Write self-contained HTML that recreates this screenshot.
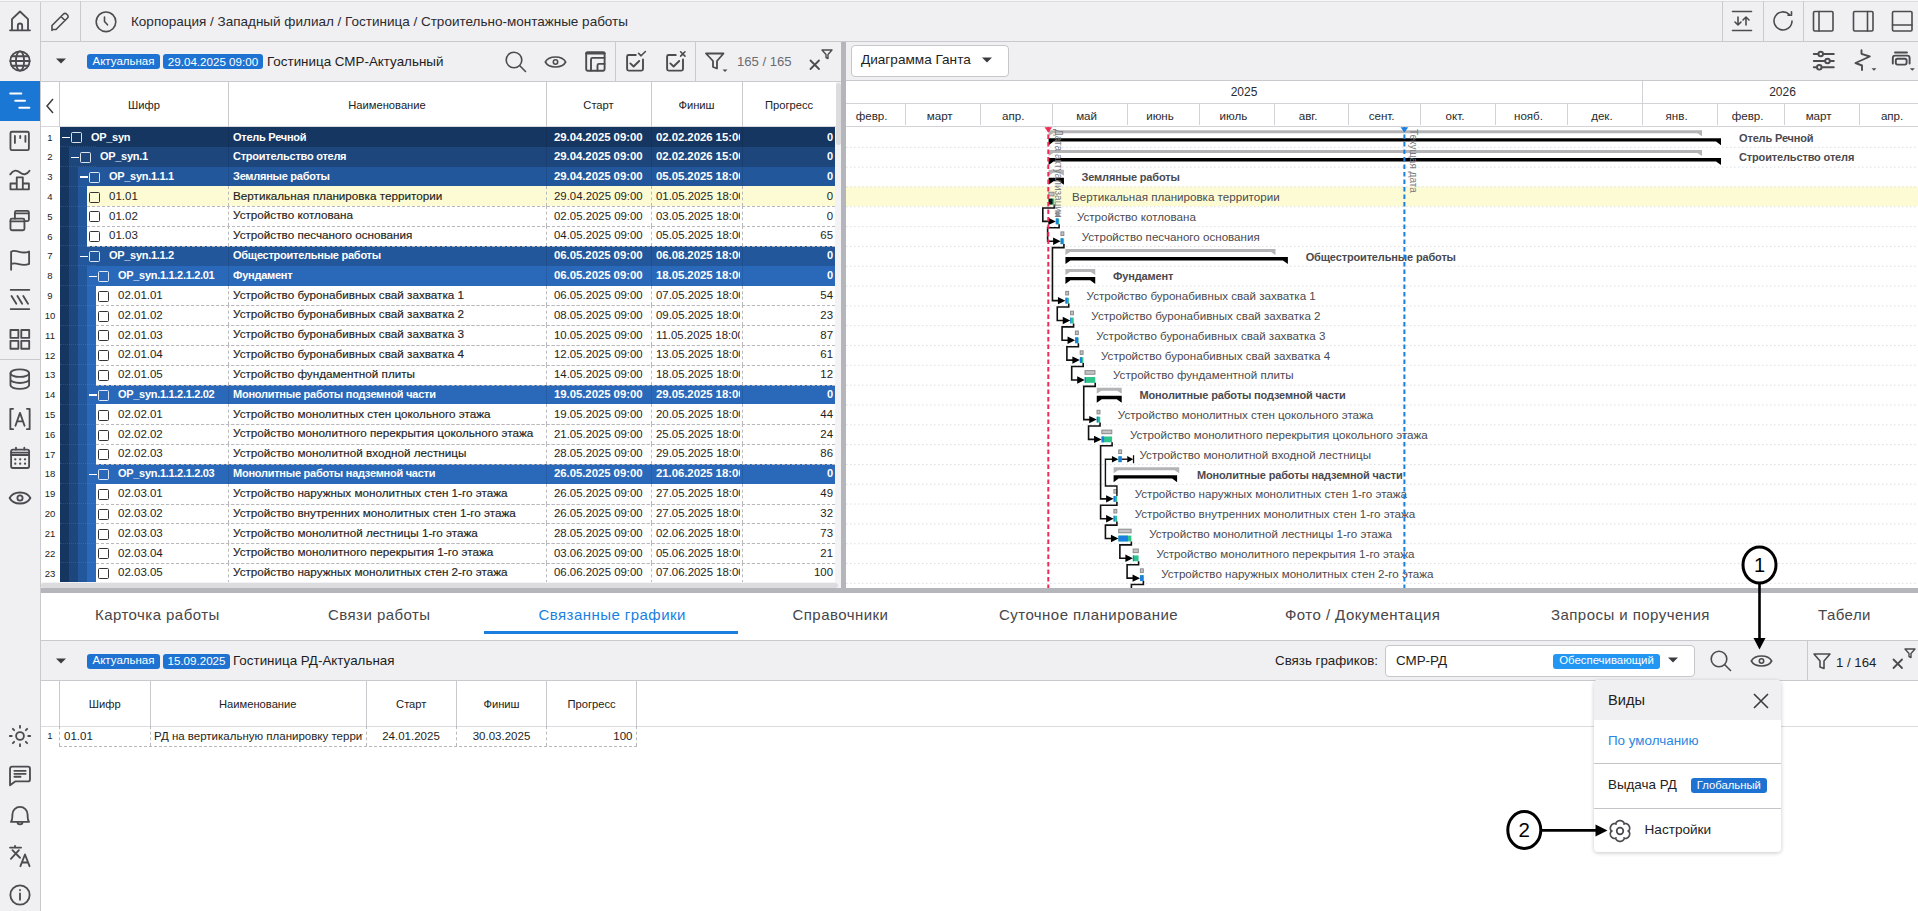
<!DOCTYPE html><html><head><meta charset="utf-8"><style>
html,body{margin:0;padding:0;}
body{width:1918px;height:911px;overflow:hidden;position:relative;background:#fff;font-family:'Liberation Sans', sans-serif;color:#222;}
svg{display:block}
.ic{fill:none;stroke:#4b4b50;stroke-width:1.6;stroke-linecap:round;stroke-linejoin:round}
</style></head><body>
<div style="position:absolute;left:0px;top:0px;width:40px;height:911px;background:#f0f0f3;"></div>
<div style="position:absolute;left:40px;top:0px;width:1px;height:911px;background:#c9c9ce;"></div>
<div style="position:absolute;left:0px;top:81px;width:40px;height:40px;background:#1b77d4;"></div>
<div style="position:absolute;left:0px;top:359px;width:40px;height:1px;background:#c9c9ce;"></div>
<svg style="position:absolute;left:6.5px;top:8px;overflow:visible;" width="26" height="26" viewBox="0 0 26 26"><g class="ic" style="stroke:#4b4b50;stroke-width:1.7" transform="scale(1.0833)"><path d="M2.8 20.6H21.2M4.6 20.6V10.2L12 3.2L19.4 10.2V20.6M10 20.6V16.3a2 2 0 0 1 4 0V20.6"/></g></svg>
<svg style="position:absolute;left:6.5px;top:48px;overflow:visible;" width="26" height="26" viewBox="0 0 26 26"><g class="ic" style="stroke:#4b4b50;stroke-width:1.7" transform="scale(1.0833)"><circle cx="12" cy="12" r="8.9"/><ellipse cx="12" cy="12" rx="3.8" ry="8.9"/><path d="M3.1 12H20.9M4.3 7.6H19.7M4.3 16.4H19.7"/></g></svg>
<svg style="position:absolute;left:6.5px;top:88px;overflow:visible;" width="26" height="26" viewBox="0 0 26 26"><g class="ic" style="stroke:#ffffff;stroke-width:1.9" transform="scale(1.0833)"><path d="M3 5H13.2M7.6 11.7H16.6M11.4 18.3H20.6"/></g></svg>
<svg style="position:absolute;left:6.5px;top:128px;overflow:visible;" width="26" height="26" viewBox="0 0 26 26"><g class="ic" style="stroke:#4b4b50;stroke-width:1.7" transform="scale(1.0833)"><rect x="3.2" y="3.5" width="17" height="16.9" rx="1.3"/><path d="M7.3 7.2V13.8M12.2 7.2V9.3M17 7.2V12.8"/></g></svg>
<svg style="position:absolute;left:6.5px;top:167px;overflow:visible;" width="26" height="26" viewBox="0 0 26 26"><g class="ic" style="stroke:#4b4b50;stroke-width:1.7" transform="scale(1.0833)"><path d="M3 6.8C6 2.4 9 2.6 12 5C15 7.4 18 7.6 20.8 3.4"/><path d="M3.2 20.6V15.2H9V20.6ZM9 20.6V9.6H14.6V20.6ZM14.6 20.6V15.2H20.2V20.6Z"/></g></svg>
<svg style="position:absolute;left:6.5px;top:207px;overflow:visible;" width="26" height="26" viewBox="0 0 26 26"><g class="ic" style="stroke:#4b4b50;stroke-width:1.7" transform="scale(1.0833)"><rect x="3.2" y="10.8" width="12.9" height="10.7" rx="1.4"/><path d="M3.2 13.2H16.1"/><path d="M7.3 10.8V5a1.4 1.4 0 0 1 1.4-1.4H18.8a1.4 1.4 0 0 1 1.4 1.4V11.6a1.4 1.4 0 0 1-1.4 1.4H16.1M7.3 5.9H20.2"/></g></svg>
<svg style="position:absolute;left:6.5px;top:247px;overflow:visible;" width="26" height="26" viewBox="0 0 26 26"><g class="ic" style="stroke:#4b4b50;stroke-width:1.7" transform="scale(1.0833)"><path d="M3.8 21V4.3C8.5 1.2 12.8 7.6 20.4 4.2V15.6C13 18.8 8.7 13 3.8 15.9"/></g></svg>
<svg style="position:absolute;left:6.5px;top:287px;overflow:visible;" width="26" height="26" viewBox="0 0 26 26"><g class="ic" style="stroke:#4b4b50;stroke-width:1.7" transform="scale(1.0833)"><path d="M3.4 2.6H20.6M3.4 20.4H20.6M4.2 8.3L8.6 15.4M9.6 8.3L14 15.4M15 8.3L19.4 15.4"/></g></svg>
<svg style="position:absolute;left:6.5px;top:327px;overflow:visible;" width="26" height="26" viewBox="0 0 26 26"><g class="ic" style="stroke:#4b4b50;stroke-width:1.7" transform="scale(1.0833)"><rect x="3.2" y="2.8" width="7.3" height="7.3"/><rect x="13.2" y="2.8" width="7.3" height="7.3"/><rect x="3.2" y="12.8" width="7.3" height="7.3"/><rect x="13.2" y="12.8" width="7.3" height="7.3"/></g></svg>
<svg style="position:absolute;left:6.5px;top:366px;overflow:visible;" width="26" height="26" viewBox="0 0 26 26"><g class="ic" style="stroke:#4b4b50;stroke-width:1.7" transform="scale(1.0833)"><ellipse cx="11.8" cy="6.6" rx="8.6" ry="3.5"/><path d="M3.2 6.6V17.6c0 2 3.9 3.5 8.6 3.5s8.6-1.5 8.6-3.5V6.6M3.2 12.2c0 2 3.9 3.5 8.6 3.5s8.6-1.5 8.6-3.5"/></g></svg>
<svg style="position:absolute;left:6.5px;top:406px;overflow:visible;" width="26" height="26" viewBox="0 0 26 26"><g class="ic" style="stroke:#4b4b50;stroke-width:1.7" transform="scale(1.0833)"><path d="M5.6 2.6H3.1V21.4H5.6M18.4 2.6H20.9V21.4H18.4M7.8 18.2L12 6.3L16.2 18.2M9.2 14.2H14.8"/></g></svg>
<svg style="position:absolute;left:6.5px;top:445px;overflow:visible;" width="26" height="26" viewBox="0 0 26 26"><g class="ic" style="stroke:#4b4b50;stroke-width:1.7" transform="scale(1.0833)"><rect x="3.8" y="4.2" width="16.6" height="17" rx="1.6"/><path d="M3.8 9.2H20.4M3.8 7H20.4M8.3 2.5V4.2M16 2.5V4.2"/><g style="stroke-width:2"><path d="M7.6 13.2h.1M12.1 13.2h.1M16.6 13.2h.1M7.6 17.2h.1M12.1 17.2h.1M16.6 17.2h.1"/></g></g></svg>
<svg style="position:absolute;left:6.5px;top:485px;overflow:visible;" width="26" height="26" viewBox="0 0 26 26"><g class="ic" style="stroke:#4b4b50;stroke-width:1.7" transform="scale(1.0833)"><path d="M2.4 12C6 5.2 18 5.2 21.6 12C18 18.8 6 18.8 2.4 12Z"/><circle cx="12" cy="12" r="2.4"/></g></svg>
<svg style="position:absolute;left:6.5px;top:723px;overflow:visible;" width="26" height="26" viewBox="0 0 26 26"><g class="ic" style="stroke:#4b4b50;stroke-width:1.7" transform="scale(1.0833)"><circle cx="12" cy="12" r="3.6"/><path d="M12 2.6V4.4M12 19.6V21.4M2.6 12H4.4M19.6 12H21.4M5.4 5.4L6.6 6.6M17.4 17.4L18.6 18.6M5.4 18.6L6.6 17.4M17.4 6.6L18.6 5.4"/></g></svg>
<svg style="position:absolute;left:6.5px;top:763px;overflow:visible;" width="26" height="26" viewBox="0 0 26 26"><g class="ic" style="stroke:#4b4b50;stroke-width:1.7" transform="scale(1.0833)"><path d="M2.8 5.2a1.8 1.8 0 0 1 1.8-1.8h14.8a1.8 1.8 0 0 1 1.8 1.8V15.2a1.8 1.8 0 0 1-1.8 1.8H7.5L2.8 20.6Z"/><path d="M6.8 7.3H17.2M6.8 10H17.2M6.8 12.7H12.5"/></g></svg>
<svg style="position:absolute;left:6.5px;top:803px;overflow:visible;" width="26" height="26" viewBox="0 0 26 26"><g class="ic" style="stroke:#4b4b50;stroke-width:1.7" transform="scale(1.0833)"><path d="M3.6 17.4H20.4C19.2 16.2 19 14.4 19 10.6a7 7 0 0 0-14 0c0 3.8-.2 5.6-1.4 6.8ZM9.6 17.4a2.4 2.4 0 0 0 4.8 0"/></g></svg>
<svg style="position:absolute;left:6.5px;top:843px;overflow:visible;" width="26" height="26" viewBox="0 0 26 26"><g class="ic" style="stroke:#4b4b50;stroke-width:1.7" transform="scale(1.0833)"><path d="M2.8 4.2H13M7.4 2.6V4.2M5 6.6L12 13.6M11 6.6L3.6 14.6M12.4 21.4L16.6 10.6L20.8 21.4M13.8 18H19.4"/></g></svg>
<svg style="position:absolute;left:6.5px;top:882px;overflow:visible;" width="26" height="26" viewBox="0 0 26 26"><g class="ic" style="stroke:#4b4b50;stroke-width:1.7" transform="scale(1.0833)"><circle cx="12" cy="12" r="8.9"/><path d="M12 10.6V16.4M12 7.4v.2"/></g></svg>
<div style="position:absolute;left:41px;top:0px;width:1877px;height:41px;background:#f0f0f3;"></div>
<div style="position:absolute;left:0px;top:0px;width:1918px;height:1px;background:#f7f7f9;"></div>
<div style="position:absolute;left:0px;top:1px;width:1918px;height:1px;background:#dcdce0;"></div>
<div style="position:absolute;left:41px;top:41px;width:1877px;height:1px;background:#c9c9ce;"></div>
<div style="position:absolute;left:80px;top:1px;width:1px;height:40px;background:#c9c9ce;"></div>
<svg style="position:absolute;left:48px;top:9px;overflow:visible;" width="24" height="24" viewBox="0 0 24 24"><g class="ic"><path d="M4 21.5V16.5L15.5 5a2.1 2.1 0 0 1 3 0L19.5 6a2.1 2.1 0 0 1 0 3L8 20.5H4ZM13 7.5L17 11.5"/></g></svg>
<svg style="position:absolute;left:94px;top:10px;overflow:visible;" width="24" height="24" viewBox="0 0 24 24"><g class="ic"><circle cx="12" cy="11.8" r="9.8"/><path d="M10.5 7V11.5L13.5 14.8"/></g></svg>
<div style="position:absolute;left:131px;top:12px;white-space:nowrap;height:20px;line-height:20px;font-size:13.5px;color:#2a2a2e;letter-spacing:0px;">Корпорация / Западный филиал / Гостиница / Строительно-монтажные работы</div>
<div style="position:absolute;left:1722px;top:1px;width:1px;height:40px;background:#c9c9ce;"></div>
<div style="position:absolute;left:1763px;top:1px;width:1px;height:40px;background:#c9c9ce;"></div>
<div style="position:absolute;left:1803px;top:1px;width:1px;height:40px;background:#c9c9ce;"></div>
<svg style="position:absolute;left:1731px;top:10px;overflow:visible;" width="22" height="22" viewBox="0 0 22 22"><g class="ic"><path d="M1.5 1.5H20.5M1.5 20.5H20.5M7 7V15M4 12L7 15L10 12M15 15V7M12 10L15 7L18 10"/></g></svg>
<svg style="position:absolute;left:1772px;top:10px;overflow:visible;" width="22" height="22" viewBox="0 0 22 22"><g class="ic"><path d="M20 11a9 9 0 1 1-2.6-6.4M19.5 1.8V5.3H16"/></g></svg>
<svg style="position:absolute;left:1812px;top:10px;overflow:visible;" width="22" height="22" viewBox="0 0 22 22"><g class="ic"><rect x="1.5" y="1.5" width="19.5" height="19.5" rx="1.2"/><path d="M7 1.5V21"/></g></svg>
<svg style="position:absolute;left:1852px;top:10px;overflow:visible;" width="22" height="22" viewBox="0 0 22 22"><g class="ic"><rect x="1.5" y="1.5" width="19.5" height="19.5" rx="1.2"/><path d="M15.5 1.5V21"/></g></svg>
<svg style="position:absolute;left:1891px;top:10px;overflow:visible;" width="22" height="22" viewBox="0 0 22 22"><g class="ic"><rect x="1.5" y="1.5" width="19.5" height="19.5" rx="1.2"/><path d="M1.5 15H21"/></g></svg>
<div style="position:absolute;left:41px;top:42px;width:800px;height:39px;background:#f0f0f3;"></div>
<div style="position:absolute;left:41px;top:81px;width:800px;height:1px;background:#c9c9ce;"></div>
<div style="position:absolute;left:846px;top:42px;width:1072px;height:38px;background:#f0f0f3;"></div>
<div style="position:absolute;left:846px;top:80px;width:1072px;height:1px;background:#c9c9ce;"></div>
<div style="position:absolute;left:615px;top:42px;width:1px;height:39px;background:#c9c9ce;"></div>
<div style="position:absolute;left:695px;top:42px;width:1px;height:39px;background:#c9c9ce;"></div>
<svg style="position:absolute;left:55px;top:57px;overflow:visible;" width="12" height="8" viewBox="0 0 12 8"><path d="M1 1.5H11L6 6.5Z" fill="#3c3c40"/></svg>
<div style="position:absolute;left:87px;top:54px;width:73px;height:15px;background:#1e73d2;border-radius:3px;color:#fff;font-size:11.5px;line-height:15px;text-align:center;white-space:nowrap;letter-spacing:0px;display:flex;align-items:center;justify-content:center;"><span style="line-height:1">Актуальная</span></div>
<div style="position:absolute;left:163px;top:54px;width:100px;height:15px;background:#1e73d2;border-radius:3px;color:#fff;font-size:11.6px;line-height:15px;text-align:center;white-space:nowrap;letter-spacing:0px;display:flex;align-items:center;justify-content:center;"><span style="line-height:1">29.04.2025 09:00</span></div>
<div style="position:absolute;left:267px;top:52px;white-space:nowrap;height:20px;line-height:20px;font-size:13.4px;color:#1e1e22;">Гостиница СМР-Актуальный</div>
<svg style="position:absolute;left:504px;top:50px;overflow:visible;" width="24" height="24" viewBox="0 0 24 24"><g class="ic"><circle cx="10" cy="10" r="7.8"/><path d="M15.8 15.8L21.5 21.5"/></g></svg>
<svg style="position:absolute;left:544px;top:50px;overflow:visible;" width="24" height="24" viewBox="0 0 24 24"><g class="ic"><path d="M1.3 12C5 5.3 18 5.3 21.7 12C18 18.7 5 18.7 1.3 12Z"/><circle cx="11.5" cy="12" r="2.2"/></g></svg>
<svg style="position:absolute;left:584px;top:50px;overflow:visible;" width="24" height="24" viewBox="0 0 24 24"><g class="ic" style="stroke-width:1.9"><rect x="2.2" y="2.3" width="18.4" height="18.4" rx="1.4"/><path d="M2.5 3.2H20.3" style="stroke-width:2.4"/><path d="M7 20.6V9.4a1.5 1.5 0 0 1 1.5-1.5H20.5M13.5 20.6V15.4a1.5 1.5 0 0 1 1.5-1.5H20.5"/></g></svg>
<svg style="position:absolute;left:624px;top:50px;overflow:visible;" width="24" height="24" viewBox="0 0 24 24"><g class="ic" style="stroke-width:1.9"><path d="M11.8 5H4.6a1.5 1.5 0 0 0-1.5 1.5V19.1a1.5 1.5 0 0 0 1.5 1.5H17.5a1.5 1.5 0 0 0 1.5-1.5V9.4"/><path d="M6.3 13.4L9.6 16.5L15.2 11"/><path d="M14.6 3.4L17.1 5.8L21.4 1.5" style="stroke-width:1.6"/></g></svg>
<svg style="position:absolute;left:664px;top:50px;overflow:visible;" width="24" height="24" viewBox="0 0 24 24"><g class="ic" style="stroke-width:1.9"><path d="M11.8 5H4.6a1.5 1.5 0 0 0-1.5 1.5V19.1a1.5 1.5 0 0 0 1.5 1.5H17.5a1.5 1.5 0 0 0 1.5-1.5V9.4"/><path d="M6.3 13.4L9.6 16.5L15.2 11"/><path d="M16.6 1.8L21 6.1M21 1.8L16.6 6.1" style="stroke-width:1.6"/></g></svg>
<svg style="position:absolute;left:704px;top:50px;overflow:visible;" width="24" height="24" viewBox="0 0 24 24"><g class="ic" style="stroke-width:1.8"><path d="M2 3.5H19.5L13 11V18.5L9 17V11Z"/></g><path d="M18.5 19.5H23.5L21 22Z" fill="#4b4b50"/></svg>
<div style="position:absolute;left:737px;top:52px;white-space:nowrap;height:20px;line-height:20px;font-size:13.1px;color:#6b6b70;">165 / 165</div>
<svg style="position:absolute;left:808px;top:48px;overflow:visible;" width="26" height="26" viewBox="0 0 26 26"><g class="ic" style="stroke-width:1.8"><path d="M2.5 12.5L11 21M11 12.5L2.5 21"/><path d="M14 2H24L20 6.5V10.5L18 9.5V6.5Z" style="stroke-width:1.4"/></g></svg>
<div style="position:absolute;left:835px;top:82px;width:6px;height:501px;background:#f3f3f5;"></div>
<div style="position:absolute;left:836px;top:83px;width:5px;height:62px;background:#dcdcdf;border-radius:2.5px;"></div>
<div style="position:absolute;left:841px;top:42px;width:5px;height:551px;background:#b5b6bb;"></div>
<div style="position:absolute;left:851px;top:45px;width:158px;height:31.5px;box-sizing:border-box;border:1px solid #c6c6cb;border-radius:4px;background:#fff;"></div>
<div style="position:absolute;left:861px;top:50px;white-space:nowrap;height:20px;line-height:20px;font-size:13.6px;color:#1e1e22;">Диаграмма Ганта</div>
<svg style="position:absolute;left:981px;top:56px;overflow:visible;" width="12" height="8" viewBox="0 0 12 8"><path d="M1 1.5H11L6 6.5Z" fill="#3c3c40"/></svg>
<svg style="position:absolute;left:1812px;top:49px;overflow:visible;" width="24" height="24" viewBox="0 0 24 24"><g class="ic" style="stroke-width:1.9"><path d="M1.8 5H6.4M11 5H21.8M1.8 12H13.2M17.8 12H21.8M1.8 18.3H5M9.6 18.3H21.8"/><circle cx="8.7" cy="5" r="2.3"/><circle cx="15.5" cy="12" r="2.3"/><circle cx="7.3" cy="18.3" r="2.3"/></g></svg>
<svg style="position:absolute;left:1854px;top:49px;overflow:visible;" width="24" height="24" viewBox="0 0 24 24"><g class="ic" style="stroke-width:1.9"><path d="M7.5 1.3V4.8L15.8 7.5L1.5 14L8 16.5V21"/></g><path d="M17.5 19.3H22.5L20 21.8Z" fill="#4b4b50"/></svg>
<svg style="position:absolute;left:1891px;top:49px;overflow:visible;" width="26" height="24" viewBox="0 0 26 24"><g class="ic" style="stroke-width:1.9"><path d="M4 3.5H16M1.8 14.5V9a2.4 2.4 0 0 1 2.4-2.4H16.2a2.4 2.4 0 0 1 2.4 2.4V14.5M4.8 11.5a1.8 1.8 0 0 1 1.8-1.8H13.8a1.8 1.8 0 0 1 1.8 1.8V13.8a1.8 1.8 0 0 1-1.8 1.8H6.6a1.8 1.8 0 0 1-1.8-1.8Z"/></g><path d="M18.8 19.3H23.8L21.3 21.8Z" fill="#4b4b50"/></svg>
<div style="position:absolute;left:41px;top:82px;width:795px;height:45px;background:#fff;"></div>
<div style="position:absolute;left:41px;top:126px;width:795px;height:1px;background:#d9d9dd;"></div>
<div style="position:absolute;left:59px;top:82px;width:1px;height:45px;background:#c9c9ce;"></div>
<div style="position:absolute;left:228px;top:82px;width:1px;height:45px;background:#c9c9ce;"></div>
<div style="position:absolute;left:546px;top:82px;width:1px;height:45px;background:#c9c9ce;"></div>
<div style="position:absolute;left:651px;top:82px;width:1px;height:45px;background:#c9c9ce;"></div>
<div style="position:absolute;left:742px;top:82px;width:1px;height:45px;background:#c9c9ce;"></div>
<svg style="position:absolute;left:44px;top:97px;overflow:visible;" width="12" height="18" viewBox="0 0 12 18"><path d="M9 2L3 9L9 16" fill="none" stroke="#3c3c40" stroke-width="1.5"/></svg>
<div style="position:absolute;left:60px;top:95px;width:168px;height:20px;line-height:20px;text-align:center;font-size:11.2px;color:#222;white-space:nowrap;">Шифр</div>
<div style="position:absolute;left:228px;top:95px;width:318px;height:20px;line-height:20px;text-align:center;font-size:11.2px;color:#222;white-space:nowrap;">Наименование</div>
<div style="position:absolute;left:546px;top:95px;width:105px;height:20px;line-height:20px;text-align:center;font-size:11.2px;color:#222;white-space:nowrap;">Старт</div>
<div style="position:absolute;left:651px;top:95px;width:91px;height:20px;line-height:20px;text-align:center;font-size:11.2px;color:#222;white-space:nowrap;">Финиш</div>
<div style="position:absolute;left:742px;top:95px;width:94px;height:20px;line-height:20px;text-align:center;font-size:11.2px;color:#222;white-space:nowrap;">Прогресс</div>
<div style="position:absolute;left:41px;top:127px;width:795px;height:455px;overflow:hidden;">
<div style="position:absolute;left:19px;top:0.0px;width:775px;height:20.12px;background:#163662;"></div>
<div style="position:absolute;left:19px;top:19.82px;width:9px;height:20.12px;background:#163662;"></div>
<div style="position:absolute;left:28px;top:19.82px;width:766px;height:20.12px;background:#1c467c;"></div>
<div style="position:absolute;left:19px;top:39.64px;width:9px;height:20.12px;background:#163662;"></div>
<div style="position:absolute;left:28px;top:39.64px;width:9px;height:20.12px;background:#1c467c;"></div>
<div style="position:absolute;left:37px;top:39.64px;width:757px;height:20.12px;background:#22579b;"></div>
<div style="position:absolute;left:19px;top:59.46px;width:9px;height:20.12px;background:#163662;"></div>
<div style="position:absolute;left:28px;top:59.46px;width:9px;height:20.12px;background:#1c467c;"></div>
<div style="position:absolute;left:37px;top:59.46px;width:9px;height:20.12px;background:#22579b;"></div>
<div style="position:absolute;left:46px;top:59.46px;width:748px;height:20.12px;background:#fdfbd4;"></div>
<div style="position:absolute;left:19px;top:79.28px;width:9px;height:20.12px;background:#163662;"></div>
<div style="position:absolute;left:28px;top:79.28px;width:9px;height:20.12px;background:#1c467c;"></div>
<div style="position:absolute;left:37px;top:79.28px;width:9px;height:20.12px;background:#22579b;"></div>
<div style="position:absolute;left:46px;top:79.28px;width:748px;height:20.12px;background:#ffffff;"></div>
<div style="position:absolute;left:19px;top:99.1px;width:9px;height:20.12px;background:#163662;"></div>
<div style="position:absolute;left:28px;top:99.1px;width:9px;height:20.12px;background:#1c467c;"></div>
<div style="position:absolute;left:37px;top:99.1px;width:9px;height:20.12px;background:#22579b;"></div>
<div style="position:absolute;left:46px;top:99.1px;width:748px;height:20.12px;background:#ffffff;"></div>
<div style="position:absolute;left:19px;top:118.92px;width:9px;height:20.12px;background:#163662;"></div>
<div style="position:absolute;left:28px;top:118.92px;width:9px;height:20.12px;background:#1c467c;"></div>
<div style="position:absolute;left:37px;top:118.92px;width:757px;height:20.12px;background:#22579b;"></div>
<div style="position:absolute;left:19px;top:138.74px;width:9px;height:20.12px;background:#163662;"></div>
<div style="position:absolute;left:28px;top:138.74px;width:9px;height:20.12px;background:#1c467c;"></div>
<div style="position:absolute;left:37px;top:138.74px;width:9px;height:20.12px;background:#22579b;"></div>
<div style="position:absolute;left:46px;top:138.74px;width:748px;height:20.12px;background:#2a69b9;"></div>
<div style="position:absolute;left:19px;top:158.56px;width:9px;height:20.12px;background:#163662;"></div>
<div style="position:absolute;left:28px;top:158.56px;width:9px;height:20.12px;background:#1c467c;"></div>
<div style="position:absolute;left:37px;top:158.56px;width:9px;height:20.12px;background:#22579b;"></div>
<div style="position:absolute;left:46px;top:158.56px;width:9px;height:20.12px;background:#2a69b9;"></div>
<div style="position:absolute;left:55px;top:158.56px;width:739px;height:20.12px;background:#ffffff;"></div>
<div style="position:absolute;left:19px;top:178.38px;width:9px;height:20.12px;background:#163662;"></div>
<div style="position:absolute;left:28px;top:178.38px;width:9px;height:20.12px;background:#1c467c;"></div>
<div style="position:absolute;left:37px;top:178.38px;width:9px;height:20.12px;background:#22579b;"></div>
<div style="position:absolute;left:46px;top:178.38px;width:9px;height:20.12px;background:#2a69b9;"></div>
<div style="position:absolute;left:55px;top:178.38px;width:739px;height:20.12px;background:#ffffff;"></div>
<div style="position:absolute;left:19px;top:198.2px;width:9px;height:20.12px;background:#163662;"></div>
<div style="position:absolute;left:28px;top:198.2px;width:9px;height:20.12px;background:#1c467c;"></div>
<div style="position:absolute;left:37px;top:198.2px;width:9px;height:20.12px;background:#22579b;"></div>
<div style="position:absolute;left:46px;top:198.2px;width:9px;height:20.12px;background:#2a69b9;"></div>
<div style="position:absolute;left:55px;top:198.2px;width:739px;height:20.12px;background:#ffffff;"></div>
<div style="position:absolute;left:19px;top:218.02px;width:9px;height:20.12px;background:#163662;"></div>
<div style="position:absolute;left:28px;top:218.02px;width:9px;height:20.12px;background:#1c467c;"></div>
<div style="position:absolute;left:37px;top:218.02px;width:9px;height:20.12px;background:#22579b;"></div>
<div style="position:absolute;left:46px;top:218.02px;width:9px;height:20.12px;background:#2a69b9;"></div>
<div style="position:absolute;left:55px;top:218.02px;width:739px;height:20.12px;background:#ffffff;"></div>
<div style="position:absolute;left:19px;top:237.84px;width:9px;height:20.12px;background:#163662;"></div>
<div style="position:absolute;left:28px;top:237.84px;width:9px;height:20.12px;background:#1c467c;"></div>
<div style="position:absolute;left:37px;top:237.84px;width:9px;height:20.12px;background:#22579b;"></div>
<div style="position:absolute;left:46px;top:237.84px;width:9px;height:20.12px;background:#2a69b9;"></div>
<div style="position:absolute;left:55px;top:237.84px;width:739px;height:20.12px;background:#ffffff;"></div>
<div style="position:absolute;left:19px;top:257.66px;width:9px;height:20.12px;background:#163662;"></div>
<div style="position:absolute;left:28px;top:257.66px;width:9px;height:20.12px;background:#1c467c;"></div>
<div style="position:absolute;left:37px;top:257.66px;width:9px;height:20.12px;background:#22579b;"></div>
<div style="position:absolute;left:46px;top:257.66px;width:748px;height:20.12px;background:#2a69b9;"></div>
<div style="position:absolute;left:19px;top:277.48px;width:9px;height:20.12px;background:#163662;"></div>
<div style="position:absolute;left:28px;top:277.48px;width:9px;height:20.12px;background:#1c467c;"></div>
<div style="position:absolute;left:37px;top:277.48px;width:9px;height:20.12px;background:#22579b;"></div>
<div style="position:absolute;left:46px;top:277.48px;width:9px;height:20.12px;background:#2a69b9;"></div>
<div style="position:absolute;left:55px;top:277.48px;width:739px;height:20.12px;background:#ffffff;"></div>
<div style="position:absolute;left:19px;top:297.3px;width:9px;height:20.12px;background:#163662;"></div>
<div style="position:absolute;left:28px;top:297.3px;width:9px;height:20.12px;background:#1c467c;"></div>
<div style="position:absolute;left:37px;top:297.3px;width:9px;height:20.12px;background:#22579b;"></div>
<div style="position:absolute;left:46px;top:297.3px;width:9px;height:20.12px;background:#2a69b9;"></div>
<div style="position:absolute;left:55px;top:297.3px;width:739px;height:20.12px;background:#ffffff;"></div>
<div style="position:absolute;left:19px;top:317.12px;width:9px;height:20.12px;background:#163662;"></div>
<div style="position:absolute;left:28px;top:317.12px;width:9px;height:20.12px;background:#1c467c;"></div>
<div style="position:absolute;left:37px;top:317.12px;width:9px;height:20.12px;background:#22579b;"></div>
<div style="position:absolute;left:46px;top:317.12px;width:9px;height:20.12px;background:#2a69b9;"></div>
<div style="position:absolute;left:55px;top:317.12px;width:739px;height:20.12px;background:#ffffff;"></div>
<div style="position:absolute;left:19px;top:336.94px;width:9px;height:20.12px;background:#163662;"></div>
<div style="position:absolute;left:28px;top:336.94px;width:9px;height:20.12px;background:#1c467c;"></div>
<div style="position:absolute;left:37px;top:336.94px;width:9px;height:20.12px;background:#22579b;"></div>
<div style="position:absolute;left:46px;top:336.94px;width:748px;height:20.12px;background:#2a69b9;"></div>
<div style="position:absolute;left:19px;top:356.76px;width:9px;height:20.12px;background:#163662;"></div>
<div style="position:absolute;left:28px;top:356.76px;width:9px;height:20.12px;background:#1c467c;"></div>
<div style="position:absolute;left:37px;top:356.76px;width:9px;height:20.12px;background:#22579b;"></div>
<div style="position:absolute;left:46px;top:356.76px;width:9px;height:20.12px;background:#2a69b9;"></div>
<div style="position:absolute;left:55px;top:356.76px;width:739px;height:20.12px;background:#ffffff;"></div>
<div style="position:absolute;left:19px;top:376.58px;width:9px;height:20.12px;background:#163662;"></div>
<div style="position:absolute;left:28px;top:376.58px;width:9px;height:20.12px;background:#1c467c;"></div>
<div style="position:absolute;left:37px;top:376.58px;width:9px;height:20.12px;background:#22579b;"></div>
<div style="position:absolute;left:46px;top:376.58px;width:9px;height:20.12px;background:#2a69b9;"></div>
<div style="position:absolute;left:55px;top:376.58px;width:739px;height:20.12px;background:#ffffff;"></div>
<div style="position:absolute;left:19px;top:396.4px;width:9px;height:20.12px;background:#163662;"></div>
<div style="position:absolute;left:28px;top:396.4px;width:9px;height:20.12px;background:#1c467c;"></div>
<div style="position:absolute;left:37px;top:396.4px;width:9px;height:20.12px;background:#22579b;"></div>
<div style="position:absolute;left:46px;top:396.4px;width:9px;height:20.12px;background:#2a69b9;"></div>
<div style="position:absolute;left:55px;top:396.4px;width:739px;height:20.12px;background:#ffffff;"></div>
<div style="position:absolute;left:19px;top:416.22px;width:9px;height:20.12px;background:#163662;"></div>
<div style="position:absolute;left:28px;top:416.22px;width:9px;height:20.12px;background:#1c467c;"></div>
<div style="position:absolute;left:37px;top:416.22px;width:9px;height:20.12px;background:#22579b;"></div>
<div style="position:absolute;left:46px;top:416.22px;width:9px;height:20.12px;background:#2a69b9;"></div>
<div style="position:absolute;left:55px;top:416.22px;width:739px;height:20.12px;background:#ffffff;"></div>
<div style="position:absolute;left:19px;top:436.04px;width:9px;height:20.12px;background:#163662;"></div>
<div style="position:absolute;left:28px;top:436.04px;width:9px;height:20.12px;background:#1c467c;"></div>
<div style="position:absolute;left:37px;top:436.04px;width:9px;height:20.12px;background:#22579b;"></div>
<div style="position:absolute;left:46px;top:436.04px;width:9px;height:20.12px;background:#2a69b9;"></div>
<div style="position:absolute;left:55px;top:436.04px;width:739px;height:20.12px;background:#ffffff;"></div>
<div style="position:absolute;left:187px;top:0.0px;width:1px;height:19.82px;background:rgba(0,0,0,0.10);"></div>
<div style="position:absolute;left:505px;top:0.0px;width:1px;height:19.82px;background:rgba(0,0,0,0.10);"></div>
<div style="position:absolute;left:610px;top:0.0px;width:1px;height:19.82px;background:rgba(0,0,0,0.10);"></div>
<div style="position:absolute;left:701px;top:0.0px;width:1px;height:19.82px;background:rgba(0,0,0,0.10);"></div>
<div style="position:absolute;left:187px;top:19.82px;width:1px;height:19.82px;background:rgba(0,0,0,0.10);"></div>
<div style="position:absolute;left:505px;top:19.82px;width:1px;height:19.82px;background:rgba(0,0,0,0.10);"></div>
<div style="position:absolute;left:610px;top:19.82px;width:1px;height:19.82px;background:rgba(0,0,0,0.10);"></div>
<div style="position:absolute;left:701px;top:19.82px;width:1px;height:19.82px;background:rgba(0,0,0,0.10);"></div>
<div style="position:absolute;left:187px;top:39.64px;width:1px;height:19.82px;background:rgba(0,0,0,0.10);"></div>
<div style="position:absolute;left:505px;top:39.64px;width:1px;height:19.82px;background:rgba(0,0,0,0.10);"></div>
<div style="position:absolute;left:610px;top:39.64px;width:1px;height:19.82px;background:rgba(0,0,0,0.10);"></div>
<div style="position:absolute;left:701px;top:39.64px;width:1px;height:19.82px;background:rgba(0,0,0,0.10);"></div>
<div style="position:absolute;left:46px;top:79.33px;width:748px;height:0px;border-top:1px dashed #b9b9bd;"></div>
<div style="position:absolute;left:187px;top:59.46px;width:0px;height:19.82px;border-left:1px dashed #b9b9bd;"></div>
<div style="position:absolute;left:505px;top:59.46px;width:0px;height:19.82px;border-left:1px dashed #b9b9bd;"></div>
<div style="position:absolute;left:610px;top:59.46px;width:0px;height:19.82px;border-left:1px dashed #b9b9bd;"></div>
<div style="position:absolute;left:701px;top:59.46px;width:0px;height:19.82px;border-left:1px dashed #b9b9bd;"></div>
<div style="position:absolute;left:46px;top:99.15px;width:748px;height:0px;border-top:1px dashed #b9b9bd;"></div>
<div style="position:absolute;left:46px;top:79.33px;width:748px;height:0px;border-top:1px dashed #b9b9bd;"></div>
<div style="position:absolute;left:187px;top:79.28px;width:0px;height:19.82px;border-left:1px dashed #b9b9bd;"></div>
<div style="position:absolute;left:505px;top:79.28px;width:0px;height:19.82px;border-left:1px dashed #b9b9bd;"></div>
<div style="position:absolute;left:610px;top:79.28px;width:0px;height:19.82px;border-left:1px dashed #b9b9bd;"></div>
<div style="position:absolute;left:701px;top:79.28px;width:0px;height:19.82px;border-left:1px dashed #b9b9bd;"></div>
<div style="position:absolute;left:46px;top:118.97px;width:748px;height:0px;border-top:1px dashed #b9b9bd;"></div>
<div style="position:absolute;left:46px;top:99.15px;width:748px;height:0px;border-top:1px dashed #b9b9bd;"></div>
<div style="position:absolute;left:187px;top:99.1px;width:0px;height:19.82px;border-left:1px dashed #b9b9bd;"></div>
<div style="position:absolute;left:505px;top:99.1px;width:0px;height:19.82px;border-left:1px dashed #b9b9bd;"></div>
<div style="position:absolute;left:610px;top:99.1px;width:0px;height:19.82px;border-left:1px dashed #b9b9bd;"></div>
<div style="position:absolute;left:701px;top:99.1px;width:0px;height:19.82px;border-left:1px dashed #b9b9bd;"></div>
<div style="position:absolute;left:187px;top:118.92px;width:1px;height:19.82px;background:rgba(0,0,0,0.10);"></div>
<div style="position:absolute;left:505px;top:118.92px;width:1px;height:19.82px;background:rgba(0,0,0,0.10);"></div>
<div style="position:absolute;left:610px;top:118.92px;width:1px;height:19.82px;background:rgba(0,0,0,0.10);"></div>
<div style="position:absolute;left:701px;top:118.92px;width:1px;height:19.82px;background:rgba(0,0,0,0.10);"></div>
<div style="position:absolute;left:187px;top:138.74px;width:1px;height:19.82px;background:rgba(0,0,0,0.10);"></div>
<div style="position:absolute;left:505px;top:138.74px;width:1px;height:19.82px;background:rgba(0,0,0,0.10);"></div>
<div style="position:absolute;left:610px;top:138.74px;width:1px;height:19.82px;background:rgba(0,0,0,0.10);"></div>
<div style="position:absolute;left:701px;top:138.74px;width:1px;height:19.82px;background:rgba(0,0,0,0.10);"></div>
<div style="position:absolute;left:55px;top:178.43px;width:739px;height:0px;border-top:1px dashed #b9b9bd;"></div>
<div style="position:absolute;left:187px;top:158.56px;width:0px;height:19.82px;border-left:1px dashed #b9b9bd;"></div>
<div style="position:absolute;left:505px;top:158.56px;width:0px;height:19.82px;border-left:1px dashed #b9b9bd;"></div>
<div style="position:absolute;left:610px;top:158.56px;width:0px;height:19.82px;border-left:1px dashed #b9b9bd;"></div>
<div style="position:absolute;left:701px;top:158.56px;width:0px;height:19.82px;border-left:1px dashed #b9b9bd;"></div>
<div style="position:absolute;left:55px;top:198.25px;width:739px;height:0px;border-top:1px dashed #b9b9bd;"></div>
<div style="position:absolute;left:55px;top:178.43px;width:739px;height:0px;border-top:1px dashed #b9b9bd;"></div>
<div style="position:absolute;left:187px;top:178.38px;width:0px;height:19.82px;border-left:1px dashed #b9b9bd;"></div>
<div style="position:absolute;left:505px;top:178.38px;width:0px;height:19.82px;border-left:1px dashed #b9b9bd;"></div>
<div style="position:absolute;left:610px;top:178.38px;width:0px;height:19.82px;border-left:1px dashed #b9b9bd;"></div>
<div style="position:absolute;left:701px;top:178.38px;width:0px;height:19.82px;border-left:1px dashed #b9b9bd;"></div>
<div style="position:absolute;left:55px;top:218.07px;width:739px;height:0px;border-top:1px dashed #b9b9bd;"></div>
<div style="position:absolute;left:55px;top:198.25px;width:739px;height:0px;border-top:1px dashed #b9b9bd;"></div>
<div style="position:absolute;left:187px;top:198.2px;width:0px;height:19.82px;border-left:1px dashed #b9b9bd;"></div>
<div style="position:absolute;left:505px;top:198.2px;width:0px;height:19.82px;border-left:1px dashed #b9b9bd;"></div>
<div style="position:absolute;left:610px;top:198.2px;width:0px;height:19.82px;border-left:1px dashed #b9b9bd;"></div>
<div style="position:absolute;left:701px;top:198.2px;width:0px;height:19.82px;border-left:1px dashed #b9b9bd;"></div>
<div style="position:absolute;left:55px;top:237.89px;width:739px;height:0px;border-top:1px dashed #b9b9bd;"></div>
<div style="position:absolute;left:55px;top:218.07px;width:739px;height:0px;border-top:1px dashed #b9b9bd;"></div>
<div style="position:absolute;left:187px;top:218.02px;width:0px;height:19.82px;border-left:1px dashed #b9b9bd;"></div>
<div style="position:absolute;left:505px;top:218.02px;width:0px;height:19.82px;border-left:1px dashed #b9b9bd;"></div>
<div style="position:absolute;left:610px;top:218.02px;width:0px;height:19.82px;border-left:1px dashed #b9b9bd;"></div>
<div style="position:absolute;left:701px;top:218.02px;width:0px;height:19.82px;border-left:1px dashed #b9b9bd;"></div>
<div style="position:absolute;left:55px;top:257.71px;width:739px;height:0px;border-top:1px dashed #b9b9bd;"></div>
<div style="position:absolute;left:55px;top:237.89px;width:739px;height:0px;border-top:1px dashed #b9b9bd;"></div>
<div style="position:absolute;left:187px;top:237.84px;width:0px;height:19.82px;border-left:1px dashed #b9b9bd;"></div>
<div style="position:absolute;left:505px;top:237.84px;width:0px;height:19.82px;border-left:1px dashed #b9b9bd;"></div>
<div style="position:absolute;left:610px;top:237.84px;width:0px;height:19.82px;border-left:1px dashed #b9b9bd;"></div>
<div style="position:absolute;left:701px;top:237.84px;width:0px;height:19.82px;border-left:1px dashed #b9b9bd;"></div>
<div style="position:absolute;left:187px;top:257.66px;width:1px;height:19.82px;background:rgba(0,0,0,0.10);"></div>
<div style="position:absolute;left:505px;top:257.66px;width:1px;height:19.82px;background:rgba(0,0,0,0.10);"></div>
<div style="position:absolute;left:610px;top:257.66px;width:1px;height:19.82px;background:rgba(0,0,0,0.10);"></div>
<div style="position:absolute;left:701px;top:257.66px;width:1px;height:19.82px;background:rgba(0,0,0,0.10);"></div>
<div style="position:absolute;left:55px;top:297.35px;width:739px;height:0px;border-top:1px dashed #b9b9bd;"></div>
<div style="position:absolute;left:187px;top:277.48px;width:0px;height:19.82px;border-left:1px dashed #b9b9bd;"></div>
<div style="position:absolute;left:505px;top:277.48px;width:0px;height:19.82px;border-left:1px dashed #b9b9bd;"></div>
<div style="position:absolute;left:610px;top:277.48px;width:0px;height:19.82px;border-left:1px dashed #b9b9bd;"></div>
<div style="position:absolute;left:701px;top:277.48px;width:0px;height:19.82px;border-left:1px dashed #b9b9bd;"></div>
<div style="position:absolute;left:55px;top:317.17px;width:739px;height:0px;border-top:1px dashed #b9b9bd;"></div>
<div style="position:absolute;left:55px;top:297.35px;width:739px;height:0px;border-top:1px dashed #b9b9bd;"></div>
<div style="position:absolute;left:187px;top:297.3px;width:0px;height:19.82px;border-left:1px dashed #b9b9bd;"></div>
<div style="position:absolute;left:505px;top:297.3px;width:0px;height:19.82px;border-left:1px dashed #b9b9bd;"></div>
<div style="position:absolute;left:610px;top:297.3px;width:0px;height:19.82px;border-left:1px dashed #b9b9bd;"></div>
<div style="position:absolute;left:701px;top:297.3px;width:0px;height:19.82px;border-left:1px dashed #b9b9bd;"></div>
<div style="position:absolute;left:55px;top:336.99px;width:739px;height:0px;border-top:1px dashed #b9b9bd;"></div>
<div style="position:absolute;left:55px;top:317.17px;width:739px;height:0px;border-top:1px dashed #b9b9bd;"></div>
<div style="position:absolute;left:187px;top:317.12px;width:0px;height:19.82px;border-left:1px dashed #b9b9bd;"></div>
<div style="position:absolute;left:505px;top:317.12px;width:0px;height:19.82px;border-left:1px dashed #b9b9bd;"></div>
<div style="position:absolute;left:610px;top:317.12px;width:0px;height:19.82px;border-left:1px dashed #b9b9bd;"></div>
<div style="position:absolute;left:701px;top:317.12px;width:0px;height:19.82px;border-left:1px dashed #b9b9bd;"></div>
<div style="position:absolute;left:187px;top:336.94px;width:1px;height:19.82px;background:rgba(0,0,0,0.10);"></div>
<div style="position:absolute;left:505px;top:336.94px;width:1px;height:19.82px;background:rgba(0,0,0,0.10);"></div>
<div style="position:absolute;left:610px;top:336.94px;width:1px;height:19.82px;background:rgba(0,0,0,0.10);"></div>
<div style="position:absolute;left:701px;top:336.94px;width:1px;height:19.82px;background:rgba(0,0,0,0.10);"></div>
<div style="position:absolute;left:55px;top:376.63px;width:739px;height:0px;border-top:1px dashed #b9b9bd;"></div>
<div style="position:absolute;left:187px;top:356.76px;width:0px;height:19.82px;border-left:1px dashed #b9b9bd;"></div>
<div style="position:absolute;left:505px;top:356.76px;width:0px;height:19.82px;border-left:1px dashed #b9b9bd;"></div>
<div style="position:absolute;left:610px;top:356.76px;width:0px;height:19.82px;border-left:1px dashed #b9b9bd;"></div>
<div style="position:absolute;left:701px;top:356.76px;width:0px;height:19.82px;border-left:1px dashed #b9b9bd;"></div>
<div style="position:absolute;left:55px;top:396.45px;width:739px;height:0px;border-top:1px dashed #b9b9bd;"></div>
<div style="position:absolute;left:55px;top:376.63px;width:739px;height:0px;border-top:1px dashed #b9b9bd;"></div>
<div style="position:absolute;left:187px;top:376.58px;width:0px;height:19.82px;border-left:1px dashed #b9b9bd;"></div>
<div style="position:absolute;left:505px;top:376.58px;width:0px;height:19.82px;border-left:1px dashed #b9b9bd;"></div>
<div style="position:absolute;left:610px;top:376.58px;width:0px;height:19.82px;border-left:1px dashed #b9b9bd;"></div>
<div style="position:absolute;left:701px;top:376.58px;width:0px;height:19.82px;border-left:1px dashed #b9b9bd;"></div>
<div style="position:absolute;left:55px;top:416.27px;width:739px;height:0px;border-top:1px dashed #b9b9bd;"></div>
<div style="position:absolute;left:55px;top:396.45px;width:739px;height:0px;border-top:1px dashed #b9b9bd;"></div>
<div style="position:absolute;left:187px;top:396.4px;width:0px;height:19.82px;border-left:1px dashed #b9b9bd;"></div>
<div style="position:absolute;left:505px;top:396.4px;width:0px;height:19.82px;border-left:1px dashed #b9b9bd;"></div>
<div style="position:absolute;left:610px;top:396.4px;width:0px;height:19.82px;border-left:1px dashed #b9b9bd;"></div>
<div style="position:absolute;left:701px;top:396.4px;width:0px;height:19.82px;border-left:1px dashed #b9b9bd;"></div>
<div style="position:absolute;left:55px;top:436.09px;width:739px;height:0px;border-top:1px dashed #b9b9bd;"></div>
<div style="position:absolute;left:55px;top:416.27px;width:739px;height:0px;border-top:1px dashed #b9b9bd;"></div>
<div style="position:absolute;left:187px;top:416.22px;width:0px;height:19.82px;border-left:1px dashed #b9b9bd;"></div>
<div style="position:absolute;left:505px;top:416.22px;width:0px;height:19.82px;border-left:1px dashed #b9b9bd;"></div>
<div style="position:absolute;left:610px;top:416.22px;width:0px;height:19.82px;border-left:1px dashed #b9b9bd;"></div>
<div style="position:absolute;left:701px;top:416.22px;width:0px;height:19.82px;border-left:1px dashed #b9b9bd;"></div>
<div style="position:absolute;left:55px;top:455.91px;width:739px;height:0px;border-top:1px dashed #b9b9bd;"></div>
<div style="position:absolute;left:55px;top:436.09px;width:739px;height:0px;border-top:1px dashed #b9b9bd;"></div>
<div style="position:absolute;left:187px;top:436.04px;width:0px;height:19.82px;border-left:1px dashed #b9b9bd;"></div>
<div style="position:absolute;left:505px;top:436.04px;width:0px;height:19.82px;border-left:1px dashed #b9b9bd;"></div>
<div style="position:absolute;left:610px;top:436.04px;width:0px;height:19.82px;border-left:1px dashed #b9b9bd;"></div>
<div style="position:absolute;left:701px;top:436.04px;width:0px;height:19.82px;border-left:1px dashed #b9b9bd;"></div>
<div style="position:absolute;left:19px;top:19.22px;width:36px;height:0px;border-top:1px dotted rgba(160,190,230,0.16);"></div>
<div style="position:absolute;left:19px;top:39.04px;width:36px;height:0px;border-top:1px dotted rgba(160,190,230,0.16);"></div>
<div style="position:absolute;left:19px;top:58.86px;width:36px;height:0px;border-top:1px dotted rgba(160,190,230,0.16);"></div>
<div style="position:absolute;left:19px;top:78.68px;width:36px;height:0px;border-top:1px dotted rgba(160,190,230,0.16);"></div>
<div style="position:absolute;left:19px;top:98.5px;width:36px;height:0px;border-top:1px dotted rgba(160,190,230,0.16);"></div>
<div style="position:absolute;left:19px;top:118.32px;width:36px;height:0px;border-top:1px dotted rgba(160,190,230,0.16);"></div>
<div style="position:absolute;left:19px;top:138.14px;width:36px;height:0px;border-top:1px dotted rgba(160,190,230,0.16);"></div>
<div style="position:absolute;left:19px;top:157.96px;width:36px;height:0px;border-top:1px dotted rgba(160,190,230,0.16);"></div>
<div style="position:absolute;left:19px;top:177.78px;width:36px;height:0px;border-top:1px dotted rgba(160,190,230,0.16);"></div>
<div style="position:absolute;left:19px;top:197.6px;width:36px;height:0px;border-top:1px dotted rgba(160,190,230,0.16);"></div>
<div style="position:absolute;left:19px;top:217.42px;width:36px;height:0px;border-top:1px dotted rgba(160,190,230,0.16);"></div>
<div style="position:absolute;left:19px;top:237.24px;width:36px;height:0px;border-top:1px dotted rgba(160,190,230,0.16);"></div>
<div style="position:absolute;left:19px;top:257.06px;width:36px;height:0px;border-top:1px dotted rgba(160,190,230,0.16);"></div>
<div style="position:absolute;left:19px;top:276.88px;width:36px;height:0px;border-top:1px dotted rgba(160,190,230,0.16);"></div>
<div style="position:absolute;left:19px;top:296.7px;width:36px;height:0px;border-top:1px dotted rgba(160,190,230,0.16);"></div>
<div style="position:absolute;left:19px;top:316.52px;width:36px;height:0px;border-top:1px dotted rgba(160,190,230,0.16);"></div>
<div style="position:absolute;left:19px;top:336.34px;width:36px;height:0px;border-top:1px dotted rgba(160,190,230,0.16);"></div>
<div style="position:absolute;left:19px;top:356.16px;width:36px;height:0px;border-top:1px dotted rgba(160,190,230,0.16);"></div>
<div style="position:absolute;left:19px;top:375.98px;width:36px;height:0px;border-top:1px dotted rgba(160,190,230,0.16);"></div>
<div style="position:absolute;left:19px;top:395.8px;width:36px;height:0px;border-top:1px dotted rgba(160,190,230,0.16);"></div>
<div style="position:absolute;left:19px;top:415.62px;width:36px;height:0px;border-top:1px dotted rgba(160,190,230,0.16);"></div>
<div style="position:absolute;left:19px;top:435.44px;width:36px;height:0px;border-top:1px dotted rgba(160,190,230,0.16);"></div>
<div style="position:absolute;left:19px;top:455.26px;width:36px;height:0px;border-top:1px dotted rgba(160,190,230,0.16);"></div>
<div style="position:absolute;left:0px;top:0.5px;white-space:nowrap;height:19.82px;line-height:19.82px;width:18px;text-align:center;font-size:9.5px;color:#222;">1</div>
<div style="position:absolute;left:20.5px;top:9.8px;width:8px;height:1.6px;background:#fff;"></div>
<div style="position:absolute;left:30px;top:5.3px;width:11px;height:11px;box-sizing:border-box;border:1px solid rgba(255,255,255,0.85);border-radius:1.5px;"></div>
<div style="position:absolute;left:50px;top:0.5px;white-space:nowrap;height:19.82px;line-height:19.82px;font-size:11px;font-weight:bold;color:#fff;letter-spacing:-0.3px;">OP_syn</div>
<div style="position:absolute;left:192px;top:0.5px;white-space:nowrap;height:19.82px;line-height:19.82px;font-size:11px;font-weight:bold;color:#fff;letter-spacing:-0.25px;">Отель Речной</div>
<div style="position:absolute;left:513px;top:0.5px;white-space:nowrap;height:19.82px;line-height:19.82px;font-size:11.4px;font-weight:bold;color:#fff;letter-spacing:-0.05px;">29.04.2025 09:00</div>
<div style="position:absolute;left:615px;top:0.5px;width:83.5px;overflow:hidden;height:19.82px;line-height:19.82px;font-size:11.4px;font-weight:bold;color:#fff;letter-spacing:-0.05px;white-space:nowrap;">02.02.2026 15:00</div>
<div style="position:absolute;left:701px;top:0.5px;width:91px;text-align:right;height:19.82px;line-height:19.82px;font-size:11px;font-weight:bold;color:#fff;white-space:nowrap;">0</div>
<div style="position:absolute;left:0px;top:20.32px;white-space:nowrap;height:19.82px;line-height:19.82px;width:18px;text-align:center;font-size:9.5px;color:#222;">2</div>
<div style="position:absolute;left:29.5px;top:29.62px;width:8px;height:1.6px;background:#fff;"></div>
<div style="position:absolute;left:39px;top:25.12px;width:11px;height:11px;box-sizing:border-box;border:1px solid rgba(255,255,255,0.85);border-radius:1.5px;"></div>
<div style="position:absolute;left:59px;top:20.32px;white-space:nowrap;height:19.82px;line-height:19.82px;font-size:11px;font-weight:bold;color:#fff;letter-spacing:-0.3px;">OP_syn.1</div>
<div style="position:absolute;left:192px;top:20.32px;white-space:nowrap;height:19.82px;line-height:19.82px;font-size:11px;font-weight:bold;color:#fff;letter-spacing:-0.25px;">Строительство отеля</div>
<div style="position:absolute;left:513px;top:20.32px;white-space:nowrap;height:19.82px;line-height:19.82px;font-size:11.4px;font-weight:bold;color:#fff;letter-spacing:-0.05px;">29.04.2025 09:00</div>
<div style="position:absolute;left:615px;top:20.32px;width:83.5px;overflow:hidden;height:19.82px;line-height:19.82px;font-size:11.4px;font-weight:bold;color:#fff;letter-spacing:-0.05px;white-space:nowrap;">02.02.2026 15:00</div>
<div style="position:absolute;left:701px;top:20.32px;width:91px;text-align:right;height:19.82px;line-height:19.82px;font-size:11px;font-weight:bold;color:#fff;white-space:nowrap;">0</div>
<div style="position:absolute;left:0px;top:40.14px;white-space:nowrap;height:19.82px;line-height:19.82px;width:18px;text-align:center;font-size:9.5px;color:#222;">3</div>
<div style="position:absolute;left:38.5px;top:49.44px;width:8px;height:1.6px;background:#fff;"></div>
<div style="position:absolute;left:48px;top:44.94px;width:11px;height:11px;box-sizing:border-box;border:1px solid rgba(255,255,255,0.85);border-radius:1.5px;"></div>
<div style="position:absolute;left:68px;top:40.14px;white-space:nowrap;height:19.82px;line-height:19.82px;font-size:11px;font-weight:bold;color:#fff;letter-spacing:-0.3px;">OP_syn.1.1.1</div>
<div style="position:absolute;left:192px;top:40.14px;white-space:nowrap;height:19.82px;line-height:19.82px;font-size:11px;font-weight:bold;color:#fff;letter-spacing:-0.25px;">Земляные работы</div>
<div style="position:absolute;left:513px;top:40.14px;white-space:nowrap;height:19.82px;line-height:19.82px;font-size:11.4px;font-weight:bold;color:#fff;letter-spacing:-0.05px;">29.04.2025 09:00</div>
<div style="position:absolute;left:615px;top:40.14px;width:83.5px;overflow:hidden;height:19.82px;line-height:19.82px;font-size:11.4px;font-weight:bold;color:#fff;letter-spacing:-0.05px;white-space:nowrap;">05.05.2025 18:00</div>
<div style="position:absolute;left:701px;top:40.14px;width:91px;text-align:right;height:19.82px;line-height:19.82px;font-size:11px;font-weight:bold;color:#fff;white-space:nowrap;">0</div>
<div style="position:absolute;left:0px;top:59.96px;white-space:nowrap;height:19.82px;line-height:19.82px;width:18px;text-align:center;font-size:9.5px;color:#222;">4</div>
<div style="position:absolute;left:48px;top:64.66px;width:11px;height:11px;box-sizing:border-box;border:1.2px solid #333;border-radius:1.5px;"></div>
<div style="position:absolute;left:68px;top:59.76px;white-space:nowrap;height:19.82px;line-height:19.82px;font-size:11.5px;color:#1e1e22;">01.01</div>
<div style="position:absolute;left:192px;top:58.56px;white-space:nowrap;height:19.82px;line-height:19.82px;font-size:11.7px;color:#1e1e22;-webkit-text-stroke:0.15px #1e1e22;">Вертикальная планировка территории</div>
<div style="position:absolute;left:513px;top:59.76px;white-space:nowrap;height:19.82px;line-height:19.82px;font-size:11.4px;color:#1e1e22;">29.04.2025 09:00</div>
<div style="position:absolute;left:615px;top:59.76px;width:83.5px;overflow:hidden;height:19.82px;line-height:19.82px;font-size:11.4px;color:#1e1e22;white-space:nowrap;">01.05.2025 18:00</div>
<div style="position:absolute;left:701px;top:59.76px;width:91px;text-align:right;height:19.82px;line-height:19.82px;font-size:11.4px;color:#1e1e22;white-space:nowrap;">0</div>
<div style="position:absolute;left:0px;top:79.78px;white-space:nowrap;height:19.82px;line-height:19.82px;width:18px;text-align:center;font-size:9.5px;color:#222;">5</div>
<div style="position:absolute;left:48px;top:84.48px;width:11px;height:11px;box-sizing:border-box;border:1.2px solid #333;border-radius:1.5px;"></div>
<div style="position:absolute;left:68px;top:79.58px;white-space:nowrap;height:19.82px;line-height:19.82px;font-size:11.5px;color:#1e1e22;">01.02</div>
<div style="position:absolute;left:192px;top:78.38px;white-space:nowrap;height:19.82px;line-height:19.82px;font-size:11.7px;color:#1e1e22;-webkit-text-stroke:0.15px #1e1e22;">Устройство котлована</div>
<div style="position:absolute;left:513px;top:79.58px;white-space:nowrap;height:19.82px;line-height:19.82px;font-size:11.4px;color:#1e1e22;">02.05.2025 09:00</div>
<div style="position:absolute;left:615px;top:79.58px;width:83.5px;overflow:hidden;height:19.82px;line-height:19.82px;font-size:11.4px;color:#1e1e22;white-space:nowrap;">03.05.2025 18:00</div>
<div style="position:absolute;left:701px;top:79.58px;width:91px;text-align:right;height:19.82px;line-height:19.82px;font-size:11.4px;color:#1e1e22;white-space:nowrap;">0</div>
<div style="position:absolute;left:0px;top:99.6px;white-space:nowrap;height:19.82px;line-height:19.82px;width:18px;text-align:center;font-size:9.5px;color:#222;">6</div>
<div style="position:absolute;left:48px;top:104.3px;width:11px;height:11px;box-sizing:border-box;border:1.2px solid #333;border-radius:1.5px;"></div>
<div style="position:absolute;left:68px;top:99.4px;white-space:nowrap;height:19.82px;line-height:19.82px;font-size:11.5px;color:#1e1e22;">01.03</div>
<div style="position:absolute;left:192px;top:98.2px;white-space:nowrap;height:19.82px;line-height:19.82px;font-size:11.7px;color:#1e1e22;-webkit-text-stroke:0.15px #1e1e22;">Устройство песчаного основания</div>
<div style="position:absolute;left:513px;top:99.4px;white-space:nowrap;height:19.82px;line-height:19.82px;font-size:11.4px;color:#1e1e22;">04.05.2025 09:00</div>
<div style="position:absolute;left:615px;top:99.4px;width:83.5px;overflow:hidden;height:19.82px;line-height:19.82px;font-size:11.4px;color:#1e1e22;white-space:nowrap;">05.05.2025 18:00</div>
<div style="position:absolute;left:701px;top:99.4px;width:91px;text-align:right;height:19.82px;line-height:19.82px;font-size:11.4px;color:#1e1e22;white-space:nowrap;">65</div>
<div style="position:absolute;left:0px;top:119.42px;white-space:nowrap;height:19.82px;line-height:19.82px;width:18px;text-align:center;font-size:9.5px;color:#222;">7</div>
<div style="position:absolute;left:38.5px;top:128.72px;width:8px;height:1.6px;background:#fff;"></div>
<div style="position:absolute;left:48px;top:124.22px;width:11px;height:11px;box-sizing:border-box;border:1px solid rgba(255,255,255,0.85);border-radius:1.5px;"></div>
<div style="position:absolute;left:68px;top:119.42px;white-space:nowrap;height:19.82px;line-height:19.82px;font-size:11px;font-weight:bold;color:#fff;letter-spacing:-0.3px;">OP_syn.1.1.2</div>
<div style="position:absolute;left:192px;top:119.42px;white-space:nowrap;height:19.82px;line-height:19.82px;font-size:11px;font-weight:bold;color:#fff;letter-spacing:-0.25px;">Общестроительные работы</div>
<div style="position:absolute;left:513px;top:119.42px;white-space:nowrap;height:19.82px;line-height:19.82px;font-size:11.4px;font-weight:bold;color:#fff;letter-spacing:-0.05px;">06.05.2025 09:00</div>
<div style="position:absolute;left:615px;top:119.42px;width:83.5px;overflow:hidden;height:19.82px;line-height:19.82px;font-size:11.4px;font-weight:bold;color:#fff;letter-spacing:-0.05px;white-space:nowrap;">06.08.2025 18:00</div>
<div style="position:absolute;left:701px;top:119.42px;width:91px;text-align:right;height:19.82px;line-height:19.82px;font-size:11px;font-weight:bold;color:#fff;white-space:nowrap;">0</div>
<div style="position:absolute;left:0px;top:139.24px;white-space:nowrap;height:19.82px;line-height:19.82px;width:18px;text-align:center;font-size:9.5px;color:#222;">8</div>
<div style="position:absolute;left:47.5px;top:148.54px;width:8px;height:1.6px;background:#fff;"></div>
<div style="position:absolute;left:57px;top:144.04px;width:11px;height:11px;box-sizing:border-box;border:1px solid rgba(255,255,255,0.85);border-radius:1.5px;"></div>
<div style="position:absolute;left:77px;top:139.24px;white-space:nowrap;height:19.82px;line-height:19.82px;font-size:11px;font-weight:bold;color:#fff;letter-spacing:-0.3px;">OP_syn.1.1.2.1.2.01</div>
<div style="position:absolute;left:192px;top:139.24px;white-space:nowrap;height:19.82px;line-height:19.82px;font-size:11px;font-weight:bold;color:#fff;letter-spacing:-0.25px;">Фундамент</div>
<div style="position:absolute;left:513px;top:139.24px;white-space:nowrap;height:19.82px;line-height:19.82px;font-size:11.4px;font-weight:bold;color:#fff;letter-spacing:-0.05px;">06.05.2025 09:00</div>
<div style="position:absolute;left:615px;top:139.24px;width:83.5px;overflow:hidden;height:19.82px;line-height:19.82px;font-size:11.4px;font-weight:bold;color:#fff;letter-spacing:-0.05px;white-space:nowrap;">18.05.2025 18:00</div>
<div style="position:absolute;left:701px;top:139.24px;width:91px;text-align:right;height:19.82px;line-height:19.82px;font-size:11px;font-weight:bold;color:#fff;white-space:nowrap;">0</div>
<div style="position:absolute;left:0px;top:159.06px;white-space:nowrap;height:19.82px;line-height:19.82px;width:18px;text-align:center;font-size:9.5px;color:#222;">9</div>
<div style="position:absolute;left:57px;top:163.76px;width:11px;height:11px;box-sizing:border-box;border:1.2px solid #333;border-radius:1.5px;"></div>
<div style="position:absolute;left:77px;top:158.86px;white-space:nowrap;height:19.82px;line-height:19.82px;font-size:11.5px;color:#1e1e22;">02.01.01</div>
<div style="position:absolute;left:192px;top:157.66px;white-space:nowrap;height:19.82px;line-height:19.82px;font-size:11.7px;color:#1e1e22;-webkit-text-stroke:0.15px #1e1e22;">Устройство буронабивных свай захватка 1</div>
<div style="position:absolute;left:513px;top:158.86px;white-space:nowrap;height:19.82px;line-height:19.82px;font-size:11.4px;color:#1e1e22;">06.05.2025 09:00</div>
<div style="position:absolute;left:615px;top:158.86px;width:83.5px;overflow:hidden;height:19.82px;line-height:19.82px;font-size:11.4px;color:#1e1e22;white-space:nowrap;">07.05.2025 18:00</div>
<div style="position:absolute;left:701px;top:158.86px;width:91px;text-align:right;height:19.82px;line-height:19.82px;font-size:11.4px;color:#1e1e22;white-space:nowrap;">54</div>
<div style="position:absolute;left:0px;top:178.88px;white-space:nowrap;height:19.82px;line-height:19.82px;width:18px;text-align:center;font-size:9.5px;color:#222;">10</div>
<div style="position:absolute;left:57px;top:183.58px;width:11px;height:11px;box-sizing:border-box;border:1.2px solid #333;border-radius:1.5px;"></div>
<div style="position:absolute;left:77px;top:178.68px;white-space:nowrap;height:19.82px;line-height:19.82px;font-size:11.5px;color:#1e1e22;">02.01.02</div>
<div style="position:absolute;left:192px;top:177.48px;white-space:nowrap;height:19.82px;line-height:19.82px;font-size:11.7px;color:#1e1e22;-webkit-text-stroke:0.15px #1e1e22;">Устройство буронабивных свай захватка 2</div>
<div style="position:absolute;left:513px;top:178.68px;white-space:nowrap;height:19.82px;line-height:19.82px;font-size:11.4px;color:#1e1e22;">08.05.2025 09:00</div>
<div style="position:absolute;left:615px;top:178.68px;width:83.5px;overflow:hidden;height:19.82px;line-height:19.82px;font-size:11.4px;color:#1e1e22;white-space:nowrap;">09.05.2025 18:00</div>
<div style="position:absolute;left:701px;top:178.68px;width:91px;text-align:right;height:19.82px;line-height:19.82px;font-size:11.4px;color:#1e1e22;white-space:nowrap;">23</div>
<div style="position:absolute;left:0px;top:198.7px;white-space:nowrap;height:19.82px;line-height:19.82px;width:18px;text-align:center;font-size:9.5px;color:#222;">11</div>
<div style="position:absolute;left:57px;top:203.4px;width:11px;height:11px;box-sizing:border-box;border:1.2px solid #333;border-radius:1.5px;"></div>
<div style="position:absolute;left:77px;top:198.5px;white-space:nowrap;height:19.82px;line-height:19.82px;font-size:11.5px;color:#1e1e22;">02.01.03</div>
<div style="position:absolute;left:192px;top:197.3px;white-space:nowrap;height:19.82px;line-height:19.82px;font-size:11.7px;color:#1e1e22;-webkit-text-stroke:0.15px #1e1e22;">Устройство буронабивных свай захватка 3</div>
<div style="position:absolute;left:513px;top:198.5px;white-space:nowrap;height:19.82px;line-height:19.82px;font-size:11.4px;color:#1e1e22;">10.05.2025 09:00</div>
<div style="position:absolute;left:615px;top:198.5px;width:83.5px;overflow:hidden;height:19.82px;line-height:19.82px;font-size:11.4px;color:#1e1e22;white-space:nowrap;">11.05.2025 18:00</div>
<div style="position:absolute;left:701px;top:198.5px;width:91px;text-align:right;height:19.82px;line-height:19.82px;font-size:11.4px;color:#1e1e22;white-space:nowrap;">87</div>
<div style="position:absolute;left:0px;top:218.52px;white-space:nowrap;height:19.82px;line-height:19.82px;width:18px;text-align:center;font-size:9.5px;color:#222;">12</div>
<div style="position:absolute;left:57px;top:223.22px;width:11px;height:11px;box-sizing:border-box;border:1.2px solid #333;border-radius:1.5px;"></div>
<div style="position:absolute;left:77px;top:218.32px;white-space:nowrap;height:19.82px;line-height:19.82px;font-size:11.5px;color:#1e1e22;">02.01.04</div>
<div style="position:absolute;left:192px;top:217.12px;white-space:nowrap;height:19.82px;line-height:19.82px;font-size:11.7px;color:#1e1e22;-webkit-text-stroke:0.15px #1e1e22;">Устройство буронабивных свай захватка 4</div>
<div style="position:absolute;left:513px;top:218.32px;white-space:nowrap;height:19.82px;line-height:19.82px;font-size:11.4px;color:#1e1e22;">12.05.2025 09:00</div>
<div style="position:absolute;left:615px;top:218.32px;width:83.5px;overflow:hidden;height:19.82px;line-height:19.82px;font-size:11.4px;color:#1e1e22;white-space:nowrap;">13.05.2025 18:00</div>
<div style="position:absolute;left:701px;top:218.32px;width:91px;text-align:right;height:19.82px;line-height:19.82px;font-size:11.4px;color:#1e1e22;white-space:nowrap;">61</div>
<div style="position:absolute;left:0px;top:238.34px;white-space:nowrap;height:19.82px;line-height:19.82px;width:18px;text-align:center;font-size:9.5px;color:#222;">13</div>
<div style="position:absolute;left:57px;top:243.04px;width:11px;height:11px;box-sizing:border-box;border:1.2px solid #333;border-radius:1.5px;"></div>
<div style="position:absolute;left:77px;top:238.14px;white-space:nowrap;height:19.82px;line-height:19.82px;font-size:11.5px;color:#1e1e22;">02.01.05</div>
<div style="position:absolute;left:192px;top:236.94px;white-space:nowrap;height:19.82px;line-height:19.82px;font-size:11.7px;color:#1e1e22;-webkit-text-stroke:0.15px #1e1e22;">Устройство фундаментной плиты</div>
<div style="position:absolute;left:513px;top:238.14px;white-space:nowrap;height:19.82px;line-height:19.82px;font-size:11.4px;color:#1e1e22;">14.05.2025 09:00</div>
<div style="position:absolute;left:615px;top:238.14px;width:83.5px;overflow:hidden;height:19.82px;line-height:19.82px;font-size:11.4px;color:#1e1e22;white-space:nowrap;">18.05.2025 18:00</div>
<div style="position:absolute;left:701px;top:238.14px;width:91px;text-align:right;height:19.82px;line-height:19.82px;font-size:11.4px;color:#1e1e22;white-space:nowrap;">12</div>
<div style="position:absolute;left:0px;top:258.16px;white-space:nowrap;height:19.82px;line-height:19.82px;width:18px;text-align:center;font-size:9.5px;color:#222;">14</div>
<div style="position:absolute;left:47.5px;top:267.46px;width:8px;height:1.6px;background:#fff;"></div>
<div style="position:absolute;left:57px;top:262.96px;width:11px;height:11px;box-sizing:border-box;border:1px solid rgba(255,255,255,0.85);border-radius:1.5px;"></div>
<div style="position:absolute;left:77px;top:258.16px;white-space:nowrap;height:19.82px;line-height:19.82px;font-size:11px;font-weight:bold;color:#fff;letter-spacing:-0.3px;">OP_syn.1.1.2.1.2.02</div>
<div style="position:absolute;left:192px;top:258.16px;white-space:nowrap;height:19.82px;line-height:19.82px;font-size:11px;font-weight:bold;color:#fff;letter-spacing:-0.25px;">Монолитные работы подземной части</div>
<div style="position:absolute;left:513px;top:258.16px;white-space:nowrap;height:19.82px;line-height:19.82px;font-size:11.4px;font-weight:bold;color:#fff;letter-spacing:-0.05px;">19.05.2025 09:00</div>
<div style="position:absolute;left:615px;top:258.16px;width:83.5px;overflow:hidden;height:19.82px;line-height:19.82px;font-size:11.4px;font-weight:bold;color:#fff;letter-spacing:-0.05px;white-space:nowrap;">29.05.2025 18:00</div>
<div style="position:absolute;left:701px;top:258.16px;width:91px;text-align:right;height:19.82px;line-height:19.82px;font-size:11px;font-weight:bold;color:#fff;white-space:nowrap;">0</div>
<div style="position:absolute;left:0px;top:277.98px;white-space:nowrap;height:19.82px;line-height:19.82px;width:18px;text-align:center;font-size:9.5px;color:#222;">15</div>
<div style="position:absolute;left:57px;top:282.68px;width:11px;height:11px;box-sizing:border-box;border:1.2px solid #333;border-radius:1.5px;"></div>
<div style="position:absolute;left:77px;top:277.78px;white-space:nowrap;height:19.82px;line-height:19.82px;font-size:11.5px;color:#1e1e22;">02.02.01</div>
<div style="position:absolute;left:192px;top:276.58px;white-space:nowrap;height:19.82px;line-height:19.82px;font-size:11.7px;color:#1e1e22;-webkit-text-stroke:0.15px #1e1e22;">Устройство монолитных стен цокольного этажа</div>
<div style="position:absolute;left:513px;top:277.78px;white-space:nowrap;height:19.82px;line-height:19.82px;font-size:11.4px;color:#1e1e22;">19.05.2025 09:00</div>
<div style="position:absolute;left:615px;top:277.78px;width:83.5px;overflow:hidden;height:19.82px;line-height:19.82px;font-size:11.4px;color:#1e1e22;white-space:nowrap;">20.05.2025 18:00</div>
<div style="position:absolute;left:701px;top:277.78px;width:91px;text-align:right;height:19.82px;line-height:19.82px;font-size:11.4px;color:#1e1e22;white-space:nowrap;">44</div>
<div style="position:absolute;left:0px;top:297.8px;white-space:nowrap;height:19.82px;line-height:19.82px;width:18px;text-align:center;font-size:9.5px;color:#222;">16</div>
<div style="position:absolute;left:57px;top:302.5px;width:11px;height:11px;box-sizing:border-box;border:1.2px solid #333;border-radius:1.5px;"></div>
<div style="position:absolute;left:77px;top:297.6px;white-space:nowrap;height:19.82px;line-height:19.82px;font-size:11.5px;color:#1e1e22;">02.02.02</div>
<div style="position:absolute;left:192px;top:296.4px;white-space:nowrap;height:19.82px;line-height:19.82px;font-size:11.7px;color:#1e1e22;-webkit-text-stroke:0.15px #1e1e22;">Устройство монолитного перекрытия цокольного этажа</div>
<div style="position:absolute;left:513px;top:297.6px;white-space:nowrap;height:19.82px;line-height:19.82px;font-size:11.4px;color:#1e1e22;">21.05.2025 09:00</div>
<div style="position:absolute;left:615px;top:297.6px;width:83.5px;overflow:hidden;height:19.82px;line-height:19.82px;font-size:11.4px;color:#1e1e22;white-space:nowrap;">25.05.2025 18:00</div>
<div style="position:absolute;left:701px;top:297.6px;width:91px;text-align:right;height:19.82px;line-height:19.82px;font-size:11.4px;color:#1e1e22;white-space:nowrap;">24</div>
<div style="position:absolute;left:0px;top:317.62px;white-space:nowrap;height:19.82px;line-height:19.82px;width:18px;text-align:center;font-size:9.5px;color:#222;">17</div>
<div style="position:absolute;left:57px;top:322.32px;width:11px;height:11px;box-sizing:border-box;border:1.2px solid #333;border-radius:1.5px;"></div>
<div style="position:absolute;left:77px;top:317.42px;white-space:nowrap;height:19.82px;line-height:19.82px;font-size:11.5px;color:#1e1e22;">02.02.03</div>
<div style="position:absolute;left:192px;top:316.22px;white-space:nowrap;height:19.82px;line-height:19.82px;font-size:11.7px;color:#1e1e22;-webkit-text-stroke:0.15px #1e1e22;">Устройство монолитной входной лестницы</div>
<div style="position:absolute;left:513px;top:317.42px;white-space:nowrap;height:19.82px;line-height:19.82px;font-size:11.4px;color:#1e1e22;">28.05.2025 09:00</div>
<div style="position:absolute;left:615px;top:317.42px;width:83.5px;overflow:hidden;height:19.82px;line-height:19.82px;font-size:11.4px;color:#1e1e22;white-space:nowrap;">29.05.2025 18:00</div>
<div style="position:absolute;left:701px;top:317.42px;width:91px;text-align:right;height:19.82px;line-height:19.82px;font-size:11.4px;color:#1e1e22;white-space:nowrap;">86</div>
<div style="position:absolute;left:0px;top:337.44px;white-space:nowrap;height:19.82px;line-height:19.82px;width:18px;text-align:center;font-size:9.5px;color:#222;">18</div>
<div style="position:absolute;left:47.5px;top:346.74px;width:8px;height:1.6px;background:#fff;"></div>
<div style="position:absolute;left:57px;top:342.24px;width:11px;height:11px;box-sizing:border-box;border:1px solid rgba(255,255,255,0.85);border-radius:1.5px;"></div>
<div style="position:absolute;left:77px;top:337.44px;white-space:nowrap;height:19.82px;line-height:19.82px;font-size:11px;font-weight:bold;color:#fff;letter-spacing:-0.3px;">OP_syn.1.1.2.1.2.03</div>
<div style="position:absolute;left:192px;top:337.44px;white-space:nowrap;height:19.82px;line-height:19.82px;font-size:11px;font-weight:bold;color:#fff;letter-spacing:-0.25px;">Монолитные работы надземной части</div>
<div style="position:absolute;left:513px;top:337.44px;white-space:nowrap;height:19.82px;line-height:19.82px;font-size:11.4px;font-weight:bold;color:#fff;letter-spacing:-0.05px;">26.05.2025 09:00</div>
<div style="position:absolute;left:615px;top:337.44px;width:83.5px;overflow:hidden;height:19.82px;line-height:19.82px;font-size:11.4px;font-weight:bold;color:#fff;letter-spacing:-0.05px;white-space:nowrap;">21.06.2025 18:00</div>
<div style="position:absolute;left:701px;top:337.44px;width:91px;text-align:right;height:19.82px;line-height:19.82px;font-size:11px;font-weight:bold;color:#fff;white-space:nowrap;">0</div>
<div style="position:absolute;left:0px;top:357.26px;white-space:nowrap;height:19.82px;line-height:19.82px;width:18px;text-align:center;font-size:9.5px;color:#222;">19</div>
<div style="position:absolute;left:57px;top:361.96px;width:11px;height:11px;box-sizing:border-box;border:1.2px solid #333;border-radius:1.5px;"></div>
<div style="position:absolute;left:77px;top:357.06px;white-space:nowrap;height:19.82px;line-height:19.82px;font-size:11.5px;color:#1e1e22;">02.03.01</div>
<div style="position:absolute;left:192px;top:355.86px;white-space:nowrap;height:19.82px;line-height:19.82px;font-size:11.7px;color:#1e1e22;-webkit-text-stroke:0.15px #1e1e22;">Устройство наружных монолитных стен 1-го этажа</div>
<div style="position:absolute;left:513px;top:357.06px;white-space:nowrap;height:19.82px;line-height:19.82px;font-size:11.4px;color:#1e1e22;">26.05.2025 09:00</div>
<div style="position:absolute;left:615px;top:357.06px;width:83.5px;overflow:hidden;height:19.82px;line-height:19.82px;font-size:11.4px;color:#1e1e22;white-space:nowrap;">27.05.2025 18:00</div>
<div style="position:absolute;left:701px;top:357.06px;width:91px;text-align:right;height:19.82px;line-height:19.82px;font-size:11.4px;color:#1e1e22;white-space:nowrap;">49</div>
<div style="position:absolute;left:0px;top:377.08px;white-space:nowrap;height:19.82px;line-height:19.82px;width:18px;text-align:center;font-size:9.5px;color:#222;">20</div>
<div style="position:absolute;left:57px;top:381.78px;width:11px;height:11px;box-sizing:border-box;border:1.2px solid #333;border-radius:1.5px;"></div>
<div style="position:absolute;left:77px;top:376.88px;white-space:nowrap;height:19.82px;line-height:19.82px;font-size:11.5px;color:#1e1e22;">02.03.02</div>
<div style="position:absolute;left:192px;top:375.68px;white-space:nowrap;height:19.82px;line-height:19.82px;font-size:11.7px;color:#1e1e22;-webkit-text-stroke:0.15px #1e1e22;">Устройство внутренних монолитных стен 1-го этажа</div>
<div style="position:absolute;left:513px;top:376.88px;white-space:nowrap;height:19.82px;line-height:19.82px;font-size:11.4px;color:#1e1e22;">26.05.2025 09:00</div>
<div style="position:absolute;left:615px;top:376.88px;width:83.5px;overflow:hidden;height:19.82px;line-height:19.82px;font-size:11.4px;color:#1e1e22;white-space:nowrap;">27.05.2025 18:00</div>
<div style="position:absolute;left:701px;top:376.88px;width:91px;text-align:right;height:19.82px;line-height:19.82px;font-size:11.4px;color:#1e1e22;white-space:nowrap;">32</div>
<div style="position:absolute;left:0px;top:396.9px;white-space:nowrap;height:19.82px;line-height:19.82px;width:18px;text-align:center;font-size:9.5px;color:#222;">21</div>
<div style="position:absolute;left:57px;top:401.6px;width:11px;height:11px;box-sizing:border-box;border:1.2px solid #333;border-radius:1.5px;"></div>
<div style="position:absolute;left:77px;top:396.7px;white-space:nowrap;height:19.82px;line-height:19.82px;font-size:11.5px;color:#1e1e22;">02.03.03</div>
<div style="position:absolute;left:192px;top:395.5px;white-space:nowrap;height:19.82px;line-height:19.82px;font-size:11.7px;color:#1e1e22;-webkit-text-stroke:0.15px #1e1e22;">Устройство монолитной лестницы 1-го этажа</div>
<div style="position:absolute;left:513px;top:396.7px;white-space:nowrap;height:19.82px;line-height:19.82px;font-size:11.4px;color:#1e1e22;">28.05.2025 09:00</div>
<div style="position:absolute;left:615px;top:396.7px;width:83.5px;overflow:hidden;height:19.82px;line-height:19.82px;font-size:11.4px;color:#1e1e22;white-space:nowrap;">02.06.2025 18:00</div>
<div style="position:absolute;left:701px;top:396.7px;width:91px;text-align:right;height:19.82px;line-height:19.82px;font-size:11.4px;color:#1e1e22;white-space:nowrap;">73</div>
<div style="position:absolute;left:0px;top:416.72px;white-space:nowrap;height:19.82px;line-height:19.82px;width:18px;text-align:center;font-size:9.5px;color:#222;">22</div>
<div style="position:absolute;left:57px;top:421.42px;width:11px;height:11px;box-sizing:border-box;border:1.2px solid #333;border-radius:1.5px;"></div>
<div style="position:absolute;left:77px;top:416.52px;white-space:nowrap;height:19.82px;line-height:19.82px;font-size:11.5px;color:#1e1e22;">02.03.04</div>
<div style="position:absolute;left:192px;top:415.32px;white-space:nowrap;height:19.82px;line-height:19.82px;font-size:11.7px;color:#1e1e22;-webkit-text-stroke:0.15px #1e1e22;">Устройство монолитного перекрытия 1-го этажа</div>
<div style="position:absolute;left:513px;top:416.52px;white-space:nowrap;height:19.82px;line-height:19.82px;font-size:11.4px;color:#1e1e22;">03.06.2025 09:00</div>
<div style="position:absolute;left:615px;top:416.52px;width:83.5px;overflow:hidden;height:19.82px;line-height:19.82px;font-size:11.4px;color:#1e1e22;white-space:nowrap;">05.06.2025 18:00</div>
<div style="position:absolute;left:701px;top:416.52px;width:91px;text-align:right;height:19.82px;line-height:19.82px;font-size:11.4px;color:#1e1e22;white-space:nowrap;">21</div>
<div style="position:absolute;left:0px;top:436.54px;white-space:nowrap;height:19.82px;line-height:19.82px;width:18px;text-align:center;font-size:9.5px;color:#222;">23</div>
<div style="position:absolute;left:57px;top:441.24px;width:11px;height:11px;box-sizing:border-box;border:1.2px solid #333;border-radius:1.5px;"></div>
<div style="position:absolute;left:77px;top:436.34px;white-space:nowrap;height:19.82px;line-height:19.82px;font-size:11.5px;color:#1e1e22;">02.03.05</div>
<div style="position:absolute;left:192px;top:435.14px;white-space:nowrap;height:19.82px;line-height:19.82px;font-size:11.7px;color:#1e1e22;-webkit-text-stroke:0.15px #1e1e22;">Устройство наружных монолитных стен 2-го этажа</div>
<div style="position:absolute;left:513px;top:436.34px;white-space:nowrap;height:19.82px;line-height:19.82px;font-size:11.4px;color:#1e1e22;">06.06.2025 09:00</div>
<div style="position:absolute;left:615px;top:436.34px;width:83.5px;overflow:hidden;height:19.82px;line-height:19.82px;font-size:11.4px;color:#1e1e22;white-space:nowrap;">07.06.2025 18:00</div>
<div style="position:absolute;left:701px;top:436.34px;width:91px;text-align:right;height:19.82px;line-height:19.82px;font-size:11.4px;color:#1e1e22;white-space:nowrap;">100</div>
</div>
<div style="position:absolute;left:41px;top:582px;width:800px;height:6px;background:#f3f3f5;"></div>
<div style="position:absolute;left:41px;top:583px;width:797px;height:4.5px;background:#dcdcdf;border-radius:3px;"></div>
<div style="position:absolute;left:41px;top:588px;width:1877px;height:5px;background:#b5b6bb;"></div>
<div style="position:absolute;left:846px;top:81px;width:1072px;height:45px;background:#fff;"></div>
<div style="position:absolute;left:846px;top:103px;width:1072px;height:1px;background:#d3d3d7;"></div>
<div style="position:absolute;left:846px;top:125.5px;width:1072px;height:1px;background:#d3d3d7;"></div>
<div style="position:absolute;left:1642px;top:81px;width:1px;height:22px;background:#d3d3d7;"></div>
<div style="position:absolute;left:837.9px;top:104.8px;width:67.4px;height:21px;line-height:21px;text-align:center;font-size:11.6px;color:#2a2a2e;white-space:nowrap;">февр.</div>
<div style="position:absolute;left:905px;top:103px;width:1px;height:22px;background:#d3d3d7;"></div>
<div style="position:absolute;left:902.4px;top:104.8px;width:74.6px;height:21px;line-height:21px;text-align:center;font-size:11.6px;color:#2a2a2e;white-space:nowrap;">март</div>
<div style="position:absolute;left:980px;top:103px;width:1px;height:22px;background:#d3d3d7;"></div>
<div style="position:absolute;left:977.1px;top:104.8px;width:72.2px;height:21px;line-height:21px;text-align:center;font-size:11.6px;color:#2a2a2e;white-space:nowrap;">апр.</div>
<div style="position:absolute;left:1052px;top:103px;width:1px;height:22px;background:#d3d3d7;"></div>
<div style="position:absolute;left:1049.3px;top:104.8px;width:74.6px;height:21px;line-height:21px;text-align:center;font-size:11.6px;color:#2a2a2e;white-space:nowrap;">май</div>
<div style="position:absolute;left:1127px;top:103px;width:1px;height:22px;background:#d3d3d7;"></div>
<div style="position:absolute;left:1123.9px;top:104.8px;width:72.2px;height:21px;line-height:21px;text-align:center;font-size:11.6px;color:#2a2a2e;white-space:nowrap;">июнь</div>
<div style="position:absolute;left:1199px;top:103px;width:1px;height:22px;background:#d3d3d7;"></div>
<div style="position:absolute;left:1196.2px;top:104.8px;width:74.6px;height:21px;line-height:21px;text-align:center;font-size:11.6px;color:#2a2a2e;white-space:nowrap;">июль</div>
<div style="position:absolute;left:1274px;top:103px;width:1px;height:22px;background:#d3d3d7;"></div>
<div style="position:absolute;left:1270.8px;top:104.8px;width:74.6px;height:21px;line-height:21px;text-align:center;font-size:11.6px;color:#2a2a2e;white-space:nowrap;">авг.</div>
<div style="position:absolute;left:1348px;top:103px;width:1px;height:22px;background:#d3d3d7;"></div>
<div style="position:absolute;left:1345.5px;top:104.8px;width:72.2px;height:21px;line-height:21px;text-align:center;font-size:11.6px;color:#2a2a2e;white-space:nowrap;">сент.</div>
<div style="position:absolute;left:1420px;top:103px;width:1px;height:22px;background:#d3d3d7;"></div>
<div style="position:absolute;left:1417.7px;top:104.8px;width:74.6px;height:21px;line-height:21px;text-align:center;font-size:11.6px;color:#2a2a2e;white-space:nowrap;">окт.</div>
<div style="position:absolute;left:1495px;top:103px;width:1px;height:22px;background:#d3d3d7;"></div>
<div style="position:absolute;left:1492.4px;top:104.8px;width:72.2px;height:21px;line-height:21px;text-align:center;font-size:11.6px;color:#2a2a2e;white-space:nowrap;">нояб.</div>
<div style="position:absolute;left:1567px;top:103px;width:1px;height:22px;background:#d3d3d7;"></div>
<div style="position:absolute;left:1564.6px;top:104.8px;width:74.6px;height:21px;line-height:21px;text-align:center;font-size:11.6px;color:#2a2a2e;white-space:nowrap;">дек.</div>
<div style="position:absolute;left:1642px;top:103px;width:1px;height:22px;background:#d3d3d7;"></div>
<div style="position:absolute;left:1639.3px;top:104.8px;width:74.6px;height:21px;line-height:21px;text-align:center;font-size:11.6px;color:#2a2a2e;white-space:nowrap;">янв.</div>
<div style="position:absolute;left:1717px;top:103px;width:1px;height:22px;background:#d3d3d7;"></div>
<div style="position:absolute;left:1713.9px;top:104.8px;width:67.4px;height:21px;line-height:21px;text-align:center;font-size:11.6px;color:#2a2a2e;white-space:nowrap;">февр.</div>
<div style="position:absolute;left:1784px;top:103px;width:1px;height:22px;background:#d3d3d7;"></div>
<div style="position:absolute;left:1781.3px;top:104.8px;width:74.6px;height:21px;line-height:21px;text-align:center;font-size:11.6px;color:#2a2a2e;white-space:nowrap;">март</div>
<div style="position:absolute;left:1859px;top:103px;width:1px;height:22px;background:#d3d3d7;"></div>
<div style="position:absolute;left:1856.0px;top:104.8px;width:72.2px;height:21px;line-height:21px;text-align:center;font-size:11.6px;color:#2a2a2e;white-space:nowrap;">апр.</div>
<div style="position:absolute;left:846px;top:82px;width:796px;height:21px;line-height:21px;text-align:center;font-size:12px;color:#2a2a2e;">2025</div>
<div style="position:absolute;left:1644.5px;top:82px;width:276px;height:21px;line-height:21px;text-align:center;font-size:12px;color:#2a2a2e;">2026</div>
<svg style="position:absolute;left:846px;top:126px;overflow:hidden;font-family:'Liberation Sans', sans-serif" width="1072" height="462" viewBox="0 0 1072 462"><rect x="0" y="60.46" width="1072" height="19.82" fill="#fdfbd4"/><line x1="0" y1="21.32" x2="1072" y2="21.32" stroke="#dedee2" stroke-width="1" stroke-dasharray="1.5 2.5"/><line x1="0" y1="41.14" x2="1072" y2="41.14" stroke="#dedee2" stroke-width="1" stroke-dasharray="1.5 2.5"/><line x1="0" y1="60.96" x2="1072" y2="60.96" stroke="#dedee2" stroke-width="1" stroke-dasharray="1.5 2.5"/><line x1="0" y1="80.78" x2="1072" y2="80.78" stroke="#dedee2" stroke-width="1" stroke-dasharray="1.5 2.5"/><line x1="0" y1="100.60" x2="1072" y2="100.60" stroke="#dedee2" stroke-width="1" stroke-dasharray="1.5 2.5"/><line x1="0" y1="120.42" x2="1072" y2="120.42" stroke="#dedee2" stroke-width="1" stroke-dasharray="1.5 2.5"/><line x1="0" y1="140.24" x2="1072" y2="140.24" stroke="#dedee2" stroke-width="1" stroke-dasharray="1.5 2.5"/><line x1="0" y1="160.06" x2="1072" y2="160.06" stroke="#dedee2" stroke-width="1" stroke-dasharray="1.5 2.5"/><line x1="0" y1="179.88" x2="1072" y2="179.88" stroke="#dedee2" stroke-width="1" stroke-dasharray="1.5 2.5"/><line x1="0" y1="199.70" x2="1072" y2="199.70" stroke="#dedee2" stroke-width="1" stroke-dasharray="1.5 2.5"/><line x1="0" y1="219.52" x2="1072" y2="219.52" stroke="#dedee2" stroke-width="1" stroke-dasharray="1.5 2.5"/><line x1="0" y1="239.34" x2="1072" y2="239.34" stroke="#dedee2" stroke-width="1" stroke-dasharray="1.5 2.5"/><line x1="0" y1="259.16" x2="1072" y2="259.16" stroke="#dedee2" stroke-width="1" stroke-dasharray="1.5 2.5"/><line x1="0" y1="278.98" x2="1072" y2="278.98" stroke="#dedee2" stroke-width="1" stroke-dasharray="1.5 2.5"/><line x1="0" y1="298.80" x2="1072" y2="298.80" stroke="#dedee2" stroke-width="1" stroke-dasharray="1.5 2.5"/><line x1="0" y1="318.62" x2="1072" y2="318.62" stroke="#dedee2" stroke-width="1" stroke-dasharray="1.5 2.5"/><line x1="0" y1="338.44" x2="1072" y2="338.44" stroke="#dedee2" stroke-width="1" stroke-dasharray="1.5 2.5"/><line x1="0" y1="358.26" x2="1072" y2="358.26" stroke="#dedee2" stroke-width="1" stroke-dasharray="1.5 2.5"/><line x1="0" y1="378.08" x2="1072" y2="378.08" stroke="#dedee2" stroke-width="1" stroke-dasharray="1.5 2.5"/><line x1="0" y1="397.90" x2="1072" y2="397.90" stroke="#dedee2" stroke-width="1" stroke-dasharray="1.5 2.5"/><line x1="0" y1="417.72" x2="1072" y2="417.72" stroke="#dedee2" stroke-width="1" stroke-dasharray="1.5 2.5"/><line x1="0" y1="437.54" x2="1072" y2="437.54" stroke="#dedee2" stroke-width="1" stroke-dasharray="1.5 2.5"/><line x1="0" y1="457.36" x2="1072" y2="457.36" stroke="#dedee2" stroke-width="1" stroke-dasharray="1.5 2.5"/><path d="M202.59 4.20 H856.00 V10.20 L851.50 7.20 H207.09 L202.59 10.20 Z" fill="#b4b4b6"/><path d="M202.59 12.20 H875.02 V19.20 L870.02 15.60 H207.59 L202.59 19.20 Z" fill="#000"/><path d="M202.59 24.02 H856.00 V30.02 L851.50 27.02 H207.09 L202.59 30.02 Z" fill="#b4b4b6"/><path d="M202.59 32.02 H875.02 V39.02 L870.02 35.42 H207.59 L202.59 39.02 Z" fill="#000"/><path d="M202.59 43.84 H217.94 V49.84 L213.44 46.84 H207.09 L202.59 49.84 Z" fill="#b4b4b6"/><path d="M202.59 51.84 H217.94 V58.84 L212.94 55.24 H207.59 L202.59 58.84 Z" fill="#000"/><path d="M219.44 123.12 H429.50 V129.12 L425.00 126.12 H223.94 L219.44 129.12 Z" fill="#b4b4b6"/><path d="M219.44 131.12 H441.88 V138.12 L436.88 134.52 H224.44 L219.44 138.12 Z" fill="#000"/><path d="M219.44 142.94 H249.24 V148.94 L244.74 145.94 H223.94 L219.44 148.94 Z" fill="#b4b4b6"/><path d="M219.44 150.94 H249.24 V157.94 L244.24 154.34 H224.44 L219.44 157.94 Z" fill="#000"/><path d="M250.75 261.86 H275.73 V267.86 L271.23 264.86 H255.25 L250.75 267.86 Z" fill="#b4b4b6"/><path d="M250.75 269.86 H275.73 V276.86 L270.73 273.26 H255.75 L250.75 276.86 Z" fill="#000"/><path d="M267.60 341.14 H333.20 V347.14 L328.70 344.14 H272.10 L267.60 347.14 Z" fill="#b4b4b6"/><path d="M267.60 349.14 H331.11 V356.14 L326.11 352.54 H272.60 L267.60 356.14 Z" fill="#000"/><rect x="202.89" y="66.26" width="5.12" height="3.6" fill="#c4c4c6" stroke="#8a8a8e" stroke-width="1"/><rect x="202.59" y="72.66" width="5.72" height="5.8" fill="#2ec48c"/><rect x="202.59" y="72.66" width="4.00" height="5.8" fill="#111"/><rect x="210.11" y="86.08" width="2.90" height="3.6" fill="#c4c4c6" stroke="#8a8a8e" stroke-width="1"/><rect x="209.81" y="92.48" width="3.50" height="5.8" fill="#2ec48c"/><rect x="209.81" y="92.48" width="2.45" height="5.8" fill="#1a7fe0"/><rect x="214.93" y="105.90" width="2.90" height="3.6" fill="#c4c4c6" stroke="#8a8a8e" stroke-width="1"/><rect x="214.63" y="112.30" width="3.50" height="5.8" fill="#2ec48c"/><rect x="214.63" y="112.30" width="2.27" height="5.8" fill="#1a7fe0"/><rect x="219.74" y="165.36" width="2.90" height="3.6" fill="#c4c4c6" stroke="#8a8a8e" stroke-width="1"/><rect x="219.44" y="171.76" width="3.50" height="5.8" fill="#2ec48c"/><rect x="219.44" y="171.76" width="1.89" height="5.8" fill="#1a7fe0"/><rect x="224.56" y="185.18" width="2.90" height="3.6" fill="#c4c4c6" stroke="#8a8a8e" stroke-width="1"/><rect x="224.26" y="191.58" width="3.50" height="5.8" fill="#2ec48c"/><rect x="224.26" y="191.58" width="0.81" height="5.8" fill="#1a7fe0"/><rect x="229.38" y="205.00" width="2.90" height="3.6" fill="#c4c4c6" stroke="#8a8a8e" stroke-width="1"/><rect x="229.08" y="211.40" width="3.50" height="5.8" fill="#2ec48c"/><rect x="229.08" y="211.40" width="3.04" height="5.8" fill="#1a7fe0"/><rect x="234.19" y="224.82" width="2.90" height="3.6" fill="#c4c4c6" stroke="#8a8a8e" stroke-width="1"/><rect x="233.89" y="231.22" width="3.50" height="5.8" fill="#2ec48c"/><rect x="233.89" y="231.22" width="2.13" height="5.8" fill="#1a7fe0"/><rect x="239.01" y="244.64" width="9.93" height="3.6" fill="#c4c4c6" stroke="#8a8a8e" stroke-width="1"/><rect x="238.71" y="251.04" width="10.53" height="5.8" fill="#2ec48c"/><rect x="238.71" y="251.04" width="1.26" height="5.8" fill="#1a7fe0"/><rect x="251.05" y="284.28" width="2.90" height="3.6" fill="#c4c4c6" stroke="#8a8a8e" stroke-width="1"/><rect x="250.75" y="290.68" width="3.50" height="5.8" fill="#2ec48c"/><rect x="250.75" y="290.68" width="1.54" height="5.8" fill="#1a7fe0"/><rect x="255.86" y="304.10" width="9.93" height="3.6" fill="#c4c4c6" stroke="#8a8a8e" stroke-width="1"/><rect x="255.56" y="310.50" width="10.53" height="5.8" fill="#2ec48c"/><rect x="255.56" y="310.50" width="2.53" height="5.8" fill="#1a7fe0"/><rect x="272.72" y="323.92" width="2.90" height="3.6" fill="#c4c4c6" stroke="#8a8a8e" stroke-width="1"/><rect x="272.42" y="330.32" width="3.50" height="5.8" fill="#2ec48c"/><rect x="272.42" y="330.32" width="3.01" height="5.8" fill="#1a7fe0"/><rect x="267.90" y="363.56" width="2.90" height="3.6" fill="#c4c4c6" stroke="#8a8a8e" stroke-width="1"/><rect x="267.60" y="369.96" width="3.50" height="5.8" fill="#2ec48c"/><rect x="267.60" y="369.96" width="1.72" height="5.8" fill="#1a7fe0"/><rect x="267.90" y="383.38" width="2.90" height="3.6" fill="#c4c4c6" stroke="#8a8a8e" stroke-width="1"/><rect x="267.60" y="389.78" width="3.50" height="5.8" fill="#2ec48c"/><rect x="267.60" y="389.78" width="1.12" height="5.8" fill="#1a7fe0"/><rect x="272.72" y="403.20" width="12.34" height="3.6" fill="#c4c4c6" stroke="#8a8a8e" stroke-width="1"/><rect x="272.42" y="409.60" width="12.94" height="5.8" fill="#2ec48c"/><rect x="272.42" y="409.60" width="9.45" height="5.8" fill="#1a7fe0"/><rect x="287.17" y="423.02" width="5.12" height="3.6" fill="#c4c4c6" stroke="#8a8a8e" stroke-width="1"/><rect x="286.87" y="429.42" width="5.72" height="5.8" fill="#2ec48c"/><rect x="286.87" y="429.42" width="1.20" height="5.8" fill="#1a7fe0"/><rect x="294.39" y="442.84" width="2.90" height="3.6" fill="#c4c4c6" stroke="#8a8a8e" stroke-width="1"/><rect x="294.09" y="449.24" width="3.50" height="5.8" fill="#2ec48c"/><rect x="294.09" y="449.24" width="3.50" height="5.8" fill="#1a7fe0"/><path d="M208.31 78.46 V81.96 H196.81 V95.38 H203.81" fill="none" stroke="#111" stroke-width="1.6"/><path d="M202.31 91.68 L209.81 95.38 L202.31 99.08 Z" fill="#000"/><path d="M213.12 98.28 V101.78 H201.63 V115.20 H208.63" fill="none" stroke="#111" stroke-width="1.6"/><path d="M207.13 111.50 L214.63 115.20 L207.13 118.90 Z" fill="#000"/><path d="M217.94 118.10 V121.60 H206.44 V174.66 H213.44" fill="none" stroke="#111" stroke-width="1.6"/><path d="M211.94 170.96 L219.44 174.66 L211.94 178.36 Z" fill="#000"/><path d="M222.75 177.56 V181.06 H211.26 V194.48 H218.26" fill="none" stroke="#111" stroke-width="1.6"/><path d="M216.76 190.78 L224.26 194.48 L216.76 198.18 Z" fill="#000"/><path d="M227.57 197.38 V200.88 H216.08 V214.30 H223.08" fill="none" stroke="#111" stroke-width="1.6"/><path d="M221.58 210.60 L229.08 214.30 L221.58 218.00 Z" fill="#000"/><path d="M232.39 217.20 V220.70 H220.89 V234.12 H227.89" fill="none" stroke="#111" stroke-width="1.6"/><path d="M226.39 230.42 L233.89 234.12 L226.39 237.82 Z" fill="#000"/><path d="M237.20 237.02 V240.52 H225.71 V253.94 H232.71" fill="none" stroke="#111" stroke-width="1.6"/><path d="M231.21 250.24 L238.71 253.94 L231.21 257.64 Z" fill="#000"/><path d="M249.24 256.84 V260.34 H237.75 V293.58 H244.75" fill="none" stroke="#111" stroke-width="1.6"/><path d="M243.25 289.88 L250.75 293.58 L243.25 297.28 Z" fill="#000"/><path d="M254.06 296.48 V299.98 H242.56 V313.40 H249.56" fill="none" stroke="#111" stroke-width="1.6"/><path d="M248.06 309.70 L255.56 313.40 L248.06 317.10 Z" fill="#000"/><path d="M266.10 316.30 V319.80 H254.60 V372.86 H261.60" fill="none" stroke="#111" stroke-width="1.6"/><path d="M260.10 369.16 L267.60 372.86 L260.10 376.56 Z" fill="#000"/><path d="M270.91 375.76 V379.26 H254.60 V392.68 H261.60" fill="none" stroke="#111" stroke-width="1.6"/><path d="M260.10 388.98 L267.60 392.68 L260.10 396.38 Z" fill="#000"/><path d="M270.91 395.58 V399.08 H259.42 V412.50 H266.42" fill="none" stroke="#111" stroke-width="1.6"/><path d="M264.92 408.80 L272.42 412.50 L264.92 416.20 Z" fill="#000"/><path d="M285.36 415.40 V418.90 H273.87 V432.32 H280.87" fill="none" stroke="#111" stroke-width="1.6"/><path d="M279.37 428.62 L286.87 432.32 L279.37 436.02 Z" fill="#000"/><path d="M292.59 435.22 V438.72 H281.09 V452.14 H288.09" fill="none" stroke="#111" stroke-width="1.6"/><path d="M286.59 448.44 L294.09 452.14 L286.59 455.84 Z" fill="#000"/><path d="M297.40 455.04 V458.54 H285.40 V464.00" fill="none" stroke="#111" stroke-width="1.6"/><path d="M275.73 333.22 H281.73" stroke="#111" stroke-width="1.4"/><path d="M281.23 330.02 L287.23 333.22 L281.23 336.42 Z" fill="#000"/><path d="M287.53 329.22 V337.22" stroke="#111" stroke-width="1.3"/><path d="M270.91 369.96 V359.96 H259.42 V333.22 H266.92" fill="none" stroke="#111" stroke-width="1.4"/><path d="M265.92 330.02 L272.42 333.22 L265.92 336.42 Z" fill="#000"/><text x="893.00" y="15.60" font-size="11" font-weight="bold" fill="#4a4a4f" letter-spacing="-0.15">Отель Речной</text><text x="893.00" y="35.42" font-size="11" font-weight="bold" fill="#4a4a4f" letter-spacing="-0.15">Строительство отеля</text><text x="235.50" y="55.24" font-size="11" font-weight="bold" fill="#4a4a4f" letter-spacing="-0.15">Земляные работы</text><text x="226.11" y="75.06" font-size="11.6" fill="#4a4a4f">Вертикальная планировка территории</text><text x="230.92" y="94.88" font-size="11.6" fill="#4a4a4f">Устройство котлована</text><text x="235.74" y="114.70" font-size="11.6" fill="#4a4a4f">Устройство песчаного основания</text><text x="459.68" y="134.52" font-size="11" font-weight="bold" fill="#4a4a4f" letter-spacing="-0.15">Общестроительные работы</text><text x="267.04" y="154.34" font-size="11" font-weight="bold" fill="#4a4a4f" letter-spacing="-0.15">Фундамент</text><text x="240.55" y="174.16" font-size="11.6" fill="#4a4a4f">Устройство буронабивных свай захватка 1</text><text x="245.37" y="193.98" font-size="11.6" fill="#4a4a4f">Устройство буронабивных свай захватка 2</text><text x="250.19" y="213.80" font-size="11.6" fill="#4a4a4f">Устройство буронабивных свай захватка 3</text><text x="255.00" y="233.62" font-size="11.6" fill="#4a4a4f">Устройство буронабивных свай захватка 4</text><text x="267.04" y="253.44" font-size="11.6" fill="#4a4a4f">Устройство фундаментной плиты</text><text x="293.53" y="273.26" font-size="11" font-weight="bold" fill="#4a4a4f" letter-spacing="-0.15">Монолитные работы подземной части</text><text x="271.86" y="293.08" font-size="11.6" fill="#4a4a4f">Устройство монолитных стен цокольного этажа</text><text x="283.90" y="312.90" font-size="11.6" fill="#4a4a4f">Устройство монолитного перекрытия цокольного этажа</text><text x="293.53" y="332.72" font-size="11.6" fill="#4a4a4f">Устройство монолитной входной лестницы</text><text x="351.00" y="352.54" font-size="11" font-weight="bold" fill="#4a4a4f" letter-spacing="-0.15">Монолитные работы надземной части</text><text x="288.71" y="372.36" font-size="11.6" fill="#4a4a4f">Устройство наружных монолитных стен 1-го этажа</text><text x="288.71" y="392.18" font-size="11.6" fill="#4a4a4f">Устройство внутренних монолитных стен 1-го этажа</text><text x="303.16" y="412.00" font-size="11.6" fill="#4a4a4f">Устройство монолитной лестницы 1-го этажа</text><text x="310.39" y="431.82" font-size="11.6" fill="#4a4a4f">Устройство монолитного перекрытия 1-го этажа</text><text x="315.20" y="451.64" font-size="11.6" fill="#4a4a4f">Устройство наружных монолитных стен 2-го этажа</text><line x1="202.30" y1="1.00" x2="202.30" y2="462.00" stroke="#ef2b55" stroke-width="2" stroke-dasharray="4.5 3"/><path d="M198.50 1.30 H206.20 L202.30 6.50 Z" fill="#ef2b55"/><line x1="558.40" y1="1.00" x2="558.40" y2="462.00" stroke="#1a7fe0" stroke-width="2" stroke-dasharray="4.5 3"/><path d="M554.50 1.30 H562.30 L558.40 6.50 Z" fill="#1a7fe0"/><text transform="translate(209.00 3.00) rotate(90)" font-size="10" fill="#7c7c80">Дата актуализации</text><text transform="translate(564.00 3.00) rotate(90)" font-size="10" fill="#7c7c80">Текущая дата</text></svg>
<div style="position:absolute;left:41px;top:640px;width:1877px;height:1px;background:#c9c9ce;"></div>
<div style="position:absolute;left:95px;top:604.5px;white-space:nowrap;height:20px;line-height:20px;font-size:15px;color:#46464b;letter-spacing:0.45px;">Карточка работы</div>
<div style="position:absolute;left:328px;top:604.5px;white-space:nowrap;height:20px;line-height:20px;font-size:15px;color:#46464b;letter-spacing:0.45px;">Связи работы</div>
<div style="position:absolute;left:538.5px;top:604.5px;white-space:nowrap;height:20px;line-height:20px;font-size:15px;color:#1a7fe0;letter-spacing:0.45px;">Связанные графики</div>
<div style="position:absolute;left:792.5px;top:604.5px;white-space:nowrap;height:20px;line-height:20px;font-size:15px;color:#46464b;letter-spacing:0.45px;">Справочники</div>
<div style="position:absolute;left:999px;top:604.5px;white-space:nowrap;height:20px;line-height:20px;font-size:15px;color:#46464b;letter-spacing:0.45px;">Суточное планирование</div>
<div style="position:absolute;left:1285px;top:604.5px;white-space:nowrap;height:20px;line-height:20px;font-size:15px;color:#46464b;letter-spacing:0.45px;">Фото / Документация</div>
<div style="position:absolute;left:1551px;top:604.5px;white-space:nowrap;height:20px;line-height:20px;font-size:15px;color:#46464b;letter-spacing:0.45px;">Запросы и поручения</div>
<div style="position:absolute;left:1818px;top:604.5px;white-space:nowrap;height:20px;line-height:20px;font-size:15px;color:#46464b;letter-spacing:0.45px;">Табели</div>
<div style="position:absolute;left:484px;top:631px;width:254px;height:2.5px;background:#1a7fe0;"></div>
<div style="position:absolute;left:41px;top:641px;width:1877px;height:39px;background:#f0f0f3;"></div>
<div style="position:absolute;left:41px;top:680px;width:1877px;height:1px;background:#c9c9ce;"></div>
<svg style="position:absolute;left:55px;top:657px;overflow:visible;" width="12" height="8" viewBox="0 0 12 8"><path d="M1 1.5H11L6 6.5Z" fill="#3c3c40"/></svg>
<div style="position:absolute;left:87px;top:653.5px;width:73px;height:15px;background:#1e73d2;border-radius:3px;color:#fff;font-size:11.5px;line-height:15px;text-align:center;white-space:nowrap;letter-spacing:0px;display:flex;align-items:center;justify-content:center;"><span style="line-height:1">Актуальная</span></div>
<div style="position:absolute;left:163px;top:653.5px;width:67px;height:15px;background:#1e73d2;border-radius:3px;color:#fff;font-size:11.6px;line-height:15px;text-align:center;white-space:nowrap;letter-spacing:0px;display:flex;align-items:center;justify-content:center;"><span style="line-height:1">15.09.2025</span></div>
<div style="position:absolute;left:233px;top:651px;white-space:nowrap;height:20px;line-height:20px;font-size:13.4px;color:#1e1e22;">Гостиница РД-Актуальная</div>
<div style="position:absolute;left:1275px;top:651px;white-space:nowrap;height:20px;line-height:20px;font-size:13.35px;color:#1e1e22;">Связь графиков:</div>
<div style="position:absolute;left:1385px;top:645px;width:310px;height:32px;box-sizing:border-box;border:1px solid #c6c6cb;border-radius:4px;background:#fff;"></div>
<div style="position:absolute;left:1396px;top:651px;white-space:nowrap;height:20px;line-height:20px;font-size:13.4px;color:#1e1e22;">СМР-РД</div>
<div style="position:absolute;left:1553px;top:653.5px;width:107px;height:15px;background:#2196f3;border-radius:3px;color:#fff;font-size:11.4px;line-height:15px;text-align:center;white-space:nowrap;letter-spacing:0px;display:flex;align-items:center;justify-content:center;"><span style="line-height:1">Обеспечивающий</span></div>
<svg style="position:absolute;left:1667px;top:656px;overflow:visible;" width="12" height="8" viewBox="0 0 12 8"><path d="M1 1.5H11L6 6.5Z" fill="#3c3c40"/></svg>
<svg style="position:absolute;left:1709px;top:649px;overflow:visible;" width="24" height="24" viewBox="0 0 24 24"><g class="ic"><circle cx="10" cy="10" r="7.8"/><path d="M15.8 15.8L21.5 21.5"/></g></svg>
<svg style="position:absolute;left:1750px;top:649px;overflow:visible;" width="24" height="24" viewBox="0 0 24 24"><g class="ic"><path d="M1.3 12C5 5.3 18 5.3 21.7 12C18 18.7 5 18.7 1.3 12Z"/><circle cx="11.5" cy="12" r="2.2"/></g></svg>
<div style="position:absolute;left:1807px;top:641px;width:1px;height:39px;background:#c9c9ce;"></div>
<svg style="position:absolute;left:1812px;top:651px;overflow:visible;" width="20" height="20" viewBox="0 0 20 20"><g class="ic" style="stroke-width:1.6"><path d="M2 3H18L12 10V17.5L8 16V10Z"/></g></svg>
<div style="position:absolute;left:1836px;top:653px;white-space:nowrap;height:20px;line-height:20px;font-size:13.2px;color:#1e1e22;">1 / 164</div>
<svg style="position:absolute;left:1891px;top:647px;overflow:visible;" width="28" height="26" viewBox="0 0 28 26"><g class="ic" style="stroke-width:1.8"><path d="M2.5 12.5L11 21M11 12.5L2.5 21"/><path d="M14 2H24L20 6.5V10.5L18 9.5V6.5Z" style="stroke-width:1.4"/></g></svg>
<div style="position:absolute;left:59px;top:681px;width:1px;height:45px;background:#c9c9ce;"></div>
<div style="position:absolute;left:150px;top:681px;width:1px;height:45px;background:#c9c9ce;"></div>
<div style="position:absolute;left:366px;top:681px;width:1px;height:45px;background:#c9c9ce;"></div>
<div style="position:absolute;left:456px;top:681px;width:1px;height:45px;background:#c9c9ce;"></div>
<div style="position:absolute;left:546px;top:681px;width:1px;height:45px;background:#c9c9ce;"></div>
<div style="position:absolute;left:636px;top:681px;width:1px;height:45px;background:#c9c9ce;"></div>
<div style="position:absolute;left:41px;top:725.5px;width:1877px;height:1px;background:#dcdce0;"></div>
<div style="position:absolute;left:60px;top:693.5px;width:89.5px;height:20px;line-height:20px;text-align:center;font-size:11.2px;color:#222;white-space:nowrap;">Шифр</div>
<div style="position:absolute;left:149.5px;top:693.5px;width:216.5px;height:20px;line-height:20px;text-align:center;font-size:11.2px;color:#222;white-space:nowrap;">Наименование</div>
<div style="position:absolute;left:366px;top:693.5px;width:90.5px;height:20px;line-height:20px;text-align:center;font-size:11.2px;color:#222;white-space:nowrap;">Старт</div>
<div style="position:absolute;left:456.5px;top:693.5px;width:90.0px;height:20px;line-height:20px;text-align:center;font-size:11.2px;color:#222;white-space:nowrap;">Финиш</div>
<div style="position:absolute;left:546.5px;top:693.5px;width:90.0px;height:20px;line-height:20px;text-align:center;font-size:11.2px;color:#222;white-space:nowrap;">Прогресс</div>
<div style="position:absolute;left:41px;top:726px;white-space:nowrap;height:20px;line-height:20px;width:18px;text-align:center;font-size:9.5px;color:#222;">1</div>
<div style="position:absolute;left:59px;top:745.5px;width:578px;height:0px;border-top:1px dashed #b9b9bd;"></div>
<div style="position:absolute;left:59px;top:726px;width:0px;height:20px;border-left:1px dashed #b9b9bd;"></div>
<div style="position:absolute;left:150px;top:726px;width:0px;height:20px;border-left:1px dashed #b9b9bd;"></div>
<div style="position:absolute;left:366px;top:726px;width:0px;height:20px;border-left:1px dashed #b9b9bd;"></div>
<div style="position:absolute;left:456px;top:726px;width:0px;height:20px;border-left:1px dashed #b9b9bd;"></div>
<div style="position:absolute;left:546px;top:726px;width:0px;height:20px;border-left:1px dashed #b9b9bd;"></div>
<div style="position:absolute;left:636px;top:726px;width:0px;height:20px;border-left:1px dashed #b9b9bd;"></div>
<div style="position:absolute;left:64px;top:726px;white-space:nowrap;height:20px;line-height:20px;font-size:11.5px;color:#1e1e22;">01.01</div>
<div style="position:absolute;left:154px;top:726px;width:209px;overflow:hidden;height:20px;line-height:20px;font-size:11.5px;color:#1e1e22;white-space:nowrap;">РД на вертикальную планировку территории</div>
<div style="position:absolute;left:366px;top:726px;width:90px;text-align:center;height:20px;line-height:20px;font-size:11.5px;color:#1e1e22;">24.01.2025</div>
<div style="position:absolute;left:456.5px;top:726px;width:90px;text-align:center;height:20px;line-height:20px;font-size:11.5px;color:#1e1e22;">30.03.2025</div>
<div style="position:absolute;left:546.5px;top:726px;width:86px;text-align:right;height:20px;line-height:20px;font-size:11.5px;color:#1e1e22;">100</div>
<div style="position:absolute;left:1593.5px;top:680px;width:187px;height:172px;background:#fff;border-radius:4px;box-shadow:0 1px 4px rgba(0,0,0,0.22);overflow:hidden;"><div style="position:absolute;left:0;top:0;width:187px;height:40px;background:#f0f0f3;"></div></div>
<div style="position:absolute;left:1608px;top:690px;white-space:nowrap;height:20px;line-height:20px;font-size:14.6px;color:#222;">Виды</div>
<svg style="position:absolute;left:1752px;top:692px;overflow:visible;" width="18" height="18" viewBox="0 0 18 18"><path d="M2 2L16 16M16 2L2 16" stroke="#3c3c40" stroke-width="1.6" fill="none"/></svg>
<div style="position:absolute;left:1608px;top:731px;white-space:nowrap;height:20px;line-height:20px;font-size:13.4px;color:#2a86e0;">По умолчанию</div>
<div style="position:absolute;left:1593.5px;top:763px;width:187px;height:1.3px;background:#c4c4c8;"></div>
<div style="position:absolute;left:1608px;top:775px;white-space:nowrap;height:20px;line-height:20px;font-size:13.4px;color:#222;">Выдача РД</div>
<div style="position:absolute;left:1691px;top:778px;width:75.5px;height:14.5px;background:#1e73d2;border-radius:3px;color:#fff;font-size:11.3px;line-height:14.5px;text-align:center;white-space:nowrap;letter-spacing:0px;display:flex;align-items:center;justify-content:center;"><span style="line-height:1">Глобальный</span></div>
<div style="position:absolute;left:1593.5px;top:807.5px;width:187px;height:1.3px;background:#c4c4c8;"></div>
<svg style="position:absolute;left:1607.5px;top:818.5px;overflow:visible;" width="24" height="24" viewBox="0 0 24 24"><g class="ic" style="stroke-width:1.7"><path d="M12.00 1.60 L12.18 1.60 L12.36 1.61 L12.54 1.63 L12.72 1.65 L12.90 1.68 L13.08 1.72 L13.26 1.77 L13.43 1.82 L13.60 1.87 L13.77 1.94 L13.94 2.01 L14.11 2.09 L14.27 2.17 L14.43 2.26 L14.58 2.36 L14.74 2.46 L14.88 2.57 L15.03 2.69 L15.16 2.81 L15.30 2.94 L15.42 3.08 L15.55 3.23 L15.66 3.38 L15.77 3.54 L15.86 3.72 L15.95 3.90 L16.02 4.10 L16.08 4.32 L16.11 4.59 L16.00 5.07 L16.36 4.74 L16.61 4.63 L16.83 4.57 L17.04 4.53 L17.24 4.51 L17.44 4.51 L17.64 4.52 L17.83 4.54 L18.01 4.57 L18.20 4.62 L18.38 4.67 L18.55 4.72 L18.72 4.79 L18.89 4.86 L19.06 4.94 L19.22 5.03 L19.38 5.12 L19.53 5.22 L19.68 5.32 L19.83 5.43 L19.97 5.55 L20.10 5.67 L20.23 5.79 L20.36 5.93 L20.48 6.06 L20.60 6.20 L20.71 6.34 L20.81 6.49 L20.91 6.64 L21.01 6.80 L21.09 6.96 L21.18 7.12 L21.25 7.29 L21.32 7.45 L21.38 7.62 L21.44 7.80 L21.49 7.97 L21.53 8.15 L21.57 8.33 L21.60 8.51 L21.62 8.69 L21.64 8.87 L21.65 9.05 L21.65 9.23 L21.64 9.42 L21.63 9.60 L21.61 9.78 L21.58 9.96 L21.54 10.15 L21.49 10.33 L21.44 10.51 L21.37 10.68 L21.30 10.86 L21.21 11.03 L21.11 11.20 L20.99 11.37 L20.85 11.54 L20.69 11.70 L20.47 11.85 L20.00 12.00 L20.47 12.15 L20.69 12.30 L20.85 12.46 L20.99 12.63 L21.11 12.80 L21.21 12.97 L21.30 13.14 L21.37 13.32 L21.44 13.49 L21.49 13.67 L21.54 13.85 L21.58 14.04 L21.61 14.22 L21.63 14.40 L21.64 14.58 L21.65 14.77 L21.65 14.95 L21.64 15.13 L21.62 15.31 L21.60 15.49 L21.57 15.67 L21.53 15.85 L21.49 16.03 L21.44 16.20 L21.38 16.38 L21.32 16.55 L21.25 16.71 L21.18 16.88 L21.09 17.04 L21.01 17.20 L20.91 17.36 L20.81 17.51 L20.71 17.66 L20.60 17.80 L20.48 17.94 L20.36 18.07 L20.23 18.21 L20.10 18.33 L19.97 18.45 L19.83 18.57 L19.68 18.68 L19.53 18.78 L19.38 18.88 L19.22 18.97 L19.06 19.06 L18.89 19.14 L18.72 19.21 L18.55 19.28 L18.38 19.33 L18.20 19.38 L18.01 19.43 L17.83 19.46 L17.64 19.48 L17.44 19.49 L17.24 19.49 L17.04 19.47 L16.83 19.43 L16.61 19.37 L16.36 19.26 L16.00 18.93 L16.11 19.41 L16.08 19.68 L16.02 19.90 L15.95 20.10 L15.86 20.28 L15.77 20.46 L15.66 20.62 L15.55 20.77 L15.42 20.92 L15.30 21.06 L15.16 21.19 L15.03 21.31 L14.88 21.43 L14.74 21.54 L14.58 21.64 L14.43 21.74 L14.27 21.83 L14.11 21.91 L13.94 21.99 L13.77 22.06 L13.60 22.13 L13.43 22.18 L13.26 22.23 L13.08 22.28 L12.90 22.32 L12.72 22.35 L12.54 22.37 L12.36 22.39 L12.18 22.40 L12.00 22.40 L11.82 22.40 L11.64 22.39 L11.46 22.37 L11.28 22.35 L11.10 22.32 L10.92 22.28 L10.74 22.23 L10.57 22.18 L10.40 22.13 L10.23 22.06 L10.06 21.99 L9.89 21.91 L9.73 21.83 L9.57 21.74 L9.42 21.64 L9.26 21.54 L9.12 21.43 L8.97 21.31 L8.84 21.19 L8.70 21.06 L8.58 20.92 L8.45 20.77 L8.34 20.62 L8.23 20.46 L8.14 20.28 L8.05 20.10 L7.98 19.90 L7.92 19.68 L7.89 19.41 L8.00 18.93 L7.64 19.26 L7.39 19.37 L7.17 19.43 L6.96 19.47 L6.76 19.49 L6.56 19.49 L6.36 19.48 L6.17 19.46 L5.99 19.43 L5.80 19.38 L5.62 19.33 L5.45 19.28 L5.28 19.21 L5.11 19.14 L4.94 19.06 L4.78 18.97 L4.62 18.88 L4.47 18.78 L4.32 18.68 L4.17 18.57 L4.03 18.45 L3.90 18.33 L3.77 18.21 L3.64 18.07 L3.52 17.94 L3.40 17.80 L3.29 17.66 L3.19 17.51 L3.09 17.36 L2.99 17.20 L2.91 17.04 L2.82 16.88 L2.75 16.71 L2.68 16.55 L2.62 16.38 L2.56 16.20 L2.51 16.03 L2.47 15.85 L2.43 15.67 L2.40 15.49 L2.38 15.31 L2.36 15.13 L2.35 14.95 L2.35 14.77 L2.36 14.58 L2.37 14.40 L2.39 14.22 L2.42 14.04 L2.46 13.85 L2.51 13.67 L2.56 13.49 L2.63 13.32 L2.70 13.14 L2.79 12.97 L2.89 12.80 L3.01 12.63 L3.15 12.46 L3.31 12.30 L3.53 12.15 L4.00 12.00 L3.53 11.85 L3.31 11.70 L3.15 11.54 L3.01 11.37 L2.89 11.20 L2.79 11.03 L2.70 10.86 L2.63 10.68 L2.56 10.51 L2.51 10.33 L2.46 10.15 L2.42 9.96 L2.39 9.78 L2.37 9.60 L2.36 9.42 L2.35 9.23 L2.35 9.05 L2.36 8.87 L2.38 8.69 L2.40 8.51 L2.43 8.33 L2.47 8.15 L2.51 7.97 L2.56 7.80 L2.62 7.62 L2.68 7.45 L2.75 7.29 L2.82 7.12 L2.91 6.96 L2.99 6.80 L3.09 6.64 L3.19 6.49 L3.29 6.34 L3.40 6.20 L3.52 6.06 L3.64 5.93 L3.77 5.79 L3.90 5.67 L4.03 5.55 L4.17 5.43 L4.32 5.32 L4.47 5.22 L4.62 5.12 L4.78 5.03 L4.94 4.94 L5.11 4.86 L5.28 4.79 L5.45 4.72 L5.62 4.67 L5.80 4.62 L5.99 4.57 L6.17 4.54 L6.36 4.52 L6.56 4.51 L6.76 4.51 L6.96 4.53 L7.17 4.57 L7.39 4.63 L7.64 4.74 L8.00 5.07 L7.89 4.59 L7.92 4.32 L7.98 4.10 L8.05 3.90 L8.14 3.72 L8.23 3.54 L8.34 3.38 L8.45 3.23 L8.58 3.08 L8.70 2.94 L8.84 2.81 L8.97 2.69 L9.12 2.57 L9.26 2.46 L9.42 2.36 L9.57 2.26 L9.73 2.17 L9.89 2.09 L10.06 2.01 L10.23 1.94 L10.40 1.87 L10.57 1.82 L10.74 1.77 L10.92 1.72 L11.10 1.68 L11.28 1.65 L11.46 1.63 L11.64 1.61 L11.82 1.60 L12.00 1.60Z"/><circle cx="12" cy="12" r="3.3"/></g></svg>
<div style="position:absolute;left:1644.5px;top:820px;white-space:nowrap;height:20px;line-height:20px;font-size:13.6px;color:#222;">Настройки</div>
<svg style="position:absolute;left:1700px;top:530px;overflow:visible;" width="100" height="130" viewBox="0 0 100 130"><ellipse cx="59.5" cy="35" rx="16.5" ry="18" fill="#fff" stroke="#000" stroke-width="3"/><path d="M59.5 53V110" stroke="#000" stroke-width="2.6"/><path d="M53.5 108H65.5L59.5 119.5Z" fill="#000"/><text x="59.5" y="42.2" text-anchor="middle" font-size="20" font-family="Liberation Sans" fill="#000">1</text></svg>
<svg style="position:absolute;left:1500px;top:800px;overflow:visible;" width="110" height="60" viewBox="0 0 110 60"><ellipse cx="24.3" cy="30" rx="16.5" ry="18.5" fill="#fff" stroke="#000" stroke-width="3"/><path d="M41 30.4H97" stroke="#000" stroke-width="2.6"/><path d="M95.5 24.4V36.4L107.5 30.4Z" fill="#000"/><text x="24.3" y="36.8" text-anchor="middle" font-size="20.5" font-family="Liberation Sans" fill="#000">2</text></svg>
</body></html>
